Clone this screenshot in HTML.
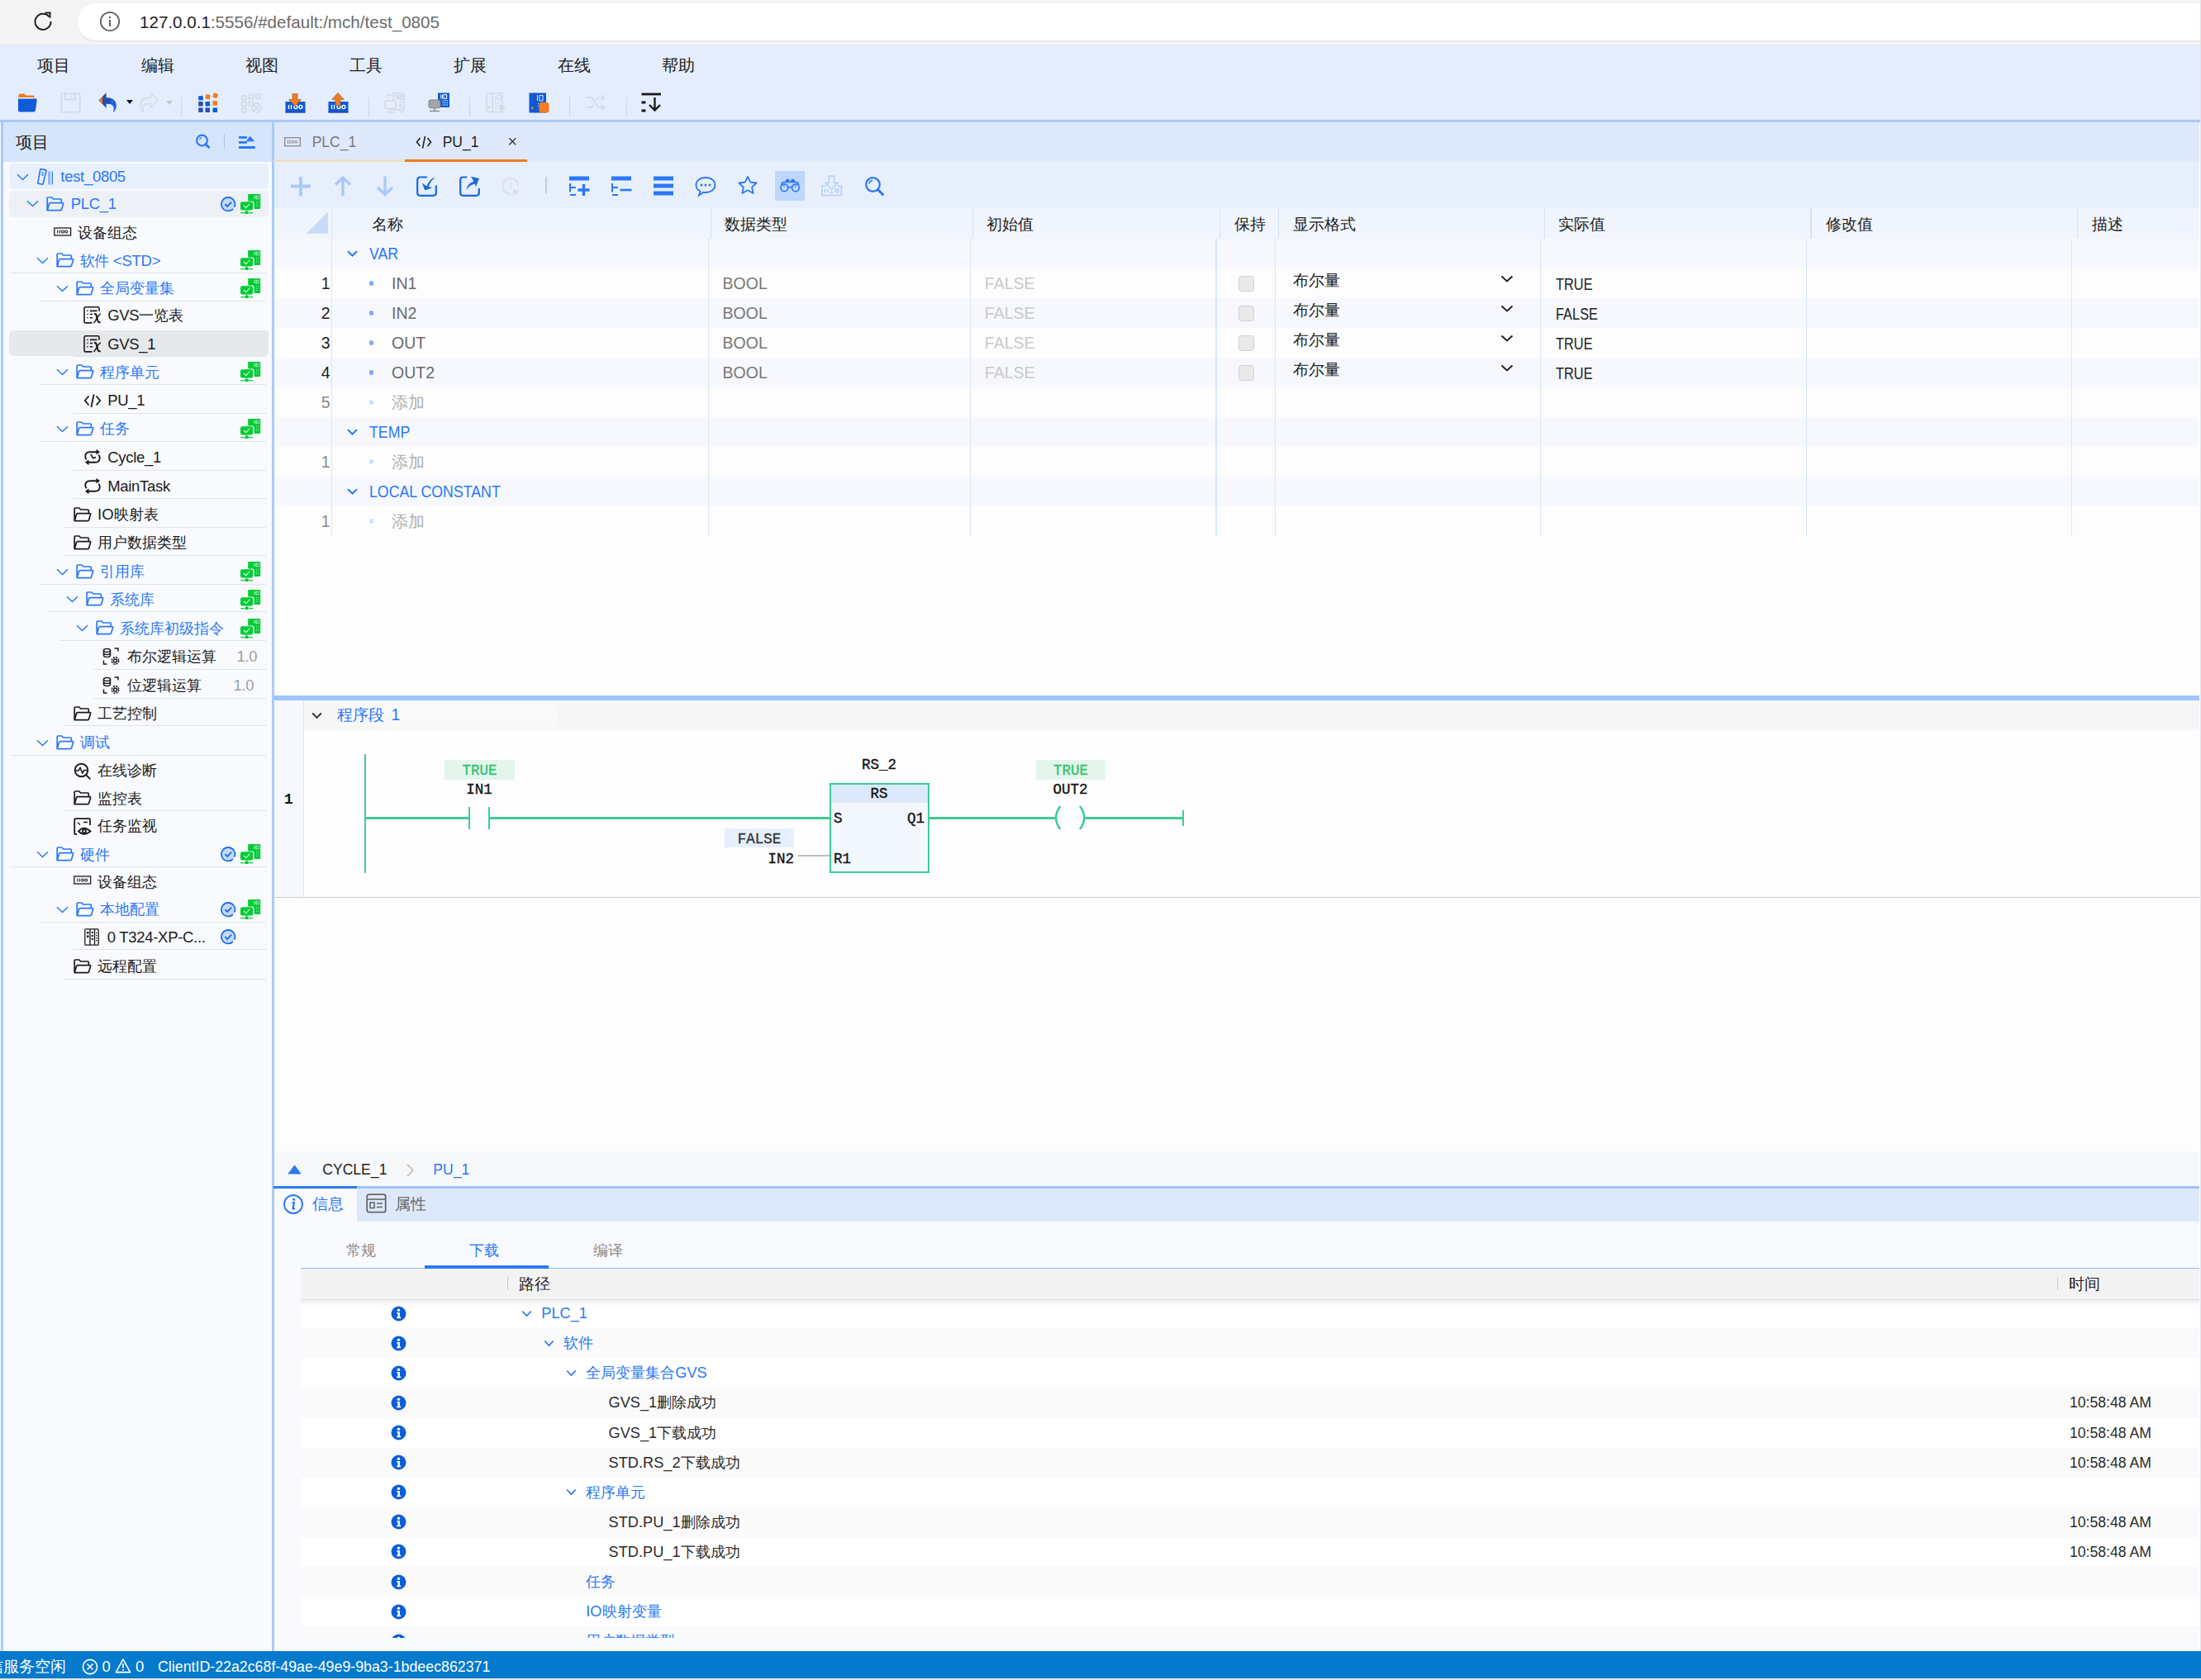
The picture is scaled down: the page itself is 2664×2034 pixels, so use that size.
<!DOCTYPE html><html><head><meta charset="utf-8"><style>
html,body{margin:0;padding:0;width:2664px;height:2034px;overflow:hidden;background:#fff;}
body{position:relative;font-family:"Liberation Sans",sans-serif;}
body>div{position:absolute;box-sizing:border-box;}
.t{white-space:nowrap;}
</style></head><body>
<div style="left:0px;top:0px;width:2664px;height:55px;background:#f4f4f4;"></div>
<div style="left:0px;top:54px;width:2664px;height:1.2px;background:#e4e4e4;"></div>
<div style="left:94px;top:4px;width:2600px;height:45px;background:#ffffff;border-radius:22.5px;box-shadow:0 2px 1px #e9e9e9;"></div>
<svg style="position:absolute;left:38px;top:12px;" width="28" height="28" viewBox="0 0 28 28"><path d="M21.5 8.5 A9.5 9.5 0 1 0 23.5 14" fill="none" stroke="#1f1f1f" stroke-width="2"/><path d="M16.5 3.5 L22.5 3.5 L22.5 9.5" fill="none" stroke="#1f1f1f" stroke-width="2"/></svg>
<svg style="position:absolute;left:120px;top:13px;" width="26" height="26" viewBox="0 0 26 26"><circle cx="13" cy="13" r="11.2" fill="none" stroke="#5f6368" stroke-width="1.8"/><rect x="12" y="11" width="2" height="8" fill="#5f6368"/><rect x="12" y="7" width="2" height="2.2" fill="#5f6368"/></svg>
<div class="t" style="left:169px;top:12.00px;line-height:30px;font-size:20.6px;color:#222;font-family:'Liberation Sans', sans-serif;"><span style="color:#1f1f1f">127.0.0.1</span><span style="color:#6b6b6b">:5556/#default:/mch/test_0805</span></div>
<div style="left:0px;top:55.2px;width:2664px;height:89.8px;background:#e3edfd;"></div>
<div class="t" style="left:44.5px;top:64.00px;line-height:30px;font-size:19.5px;color:#222;font-family:'Liberation Sans', sans-serif;">项目</div>
<div class="t" style="left:170.5px;top:64.00px;line-height:30px;font-size:19.5px;color:#222;font-family:'Liberation Sans', sans-serif;">编辑</div>
<div class="t" style="left:296.5px;top:64.00px;line-height:30px;font-size:19.5px;color:#222;font-family:'Liberation Sans', sans-serif;">视图</div>
<div class="t" style="left:422.5px;top:64.00px;line-height:30px;font-size:19.5px;color:#222;font-family:'Liberation Sans', sans-serif;">工具</div>
<div class="t" style="left:548.5px;top:64.00px;line-height:30px;font-size:19.5px;color:#222;font-family:'Liberation Sans', sans-serif;">扩展</div>
<div class="t" style="left:674.5px;top:64.00px;line-height:30px;font-size:19.5px;color:#222;font-family:'Liberation Sans', sans-serif;">在线</div>
<div class="t" style="left:800.5px;top:64.00px;line-height:30px;font-size:19.5px;color:#222;font-family:'Liberation Sans', sans-serif;">帮助</div>
<div style="left:0px;top:145px;width:2664px;height:3px;background:#a9c9f9;"></div>
<svg style="position:absolute;left:21px;top:112px;" width="25" height="25" viewBox="0 0 25 25"><path d="M1.5 3 Q1.5 1.5 3 1.5 H8.5 L10.5 3.5 H19 Q20.5 3.5 20.5 5 V8 H1.5 Z" fill="#f47b20"/><rect x="2" y="6" width="17.5" height="4" fill="#fff"/><path d="M1 8.5 Q1 7.5 2.2 7.5 H22.5 Q24 7.5 23.7 9 L22 21.5 Q21.7 23.5 19.7 23.5 H3 Q1 23.5 1 21.5 Z" fill="#0f5bd8"/></svg>
<svg style="position:absolute;left:73px;top:112px;" width="25" height="25" viewBox="0 0 25 25"><rect x="1.2" y="1.2" width="22.6" height="22.6" rx="2.5" fill="none" stroke="#d3d9e2" stroke-width="1.6"/><path d="M6 1.5 V8.5 H18 V1.5" fill="none" stroke="#d3d9e2" stroke-width="1.6"/><path d="M12.5 3.5 V6" stroke="#d3d9e2" stroke-width="1.3"/></svg>
<svg style="position:absolute;left:119px;top:111.5px;" width="24" height="26" viewBox="0 0 24 26"><path d="M9.5 6.5 H12.5 Q21.5 7 21.9 16 Q22 20.5 17.8 24.5 Q19.5 19.5 18 16.5 Q16 13.5 9.5 13.5 Z" fill="#1d66de"/><path d="M9 6.5 H14.5 V13.5 H9 Z" fill="#2a4fa8"/><path d="M0.5 9.5 L9.6 0.3 V18.7 Z" fill="#2a4fa8"/><path d="M0.5 9.5 L5 5 V14 Z" fill="#f47b20"/></svg>
<svg style="position:absolute;left:153px;top:121px;" width="8" height="6" viewBox="0 0 8 6"><path d="M0 0 H8 L4 5 Z" fill="#1a1a1a"/></svg>
<svg style="position:absolute;left:168px;top:111.5px;" width="24" height="26" viewBox="0 0 24 26"><path d="M14.5 6.5 H11.5 Q2.5 7 2.1 16 Q2 20.5 6.2 24.5 Q4.5 19.5 6 16.5 Q8 13.5 14.5 13.5 V18.7 L23.5 9.5 L14.5 0.3 Z" fill="none" stroke="#d3d9e2" stroke-width="1.3" stroke-linejoin="round"/></svg>
<svg style="position:absolute;left:201px;top:122px;" width="8" height="6" viewBox="0 0 8 6"><path d="M0 0 H8 L4 5 Z" fill="#c4c4c4"/></svg>
<div style="left:219px;top:118px;width:1.3px;height:24px;background:#cfd6df;"></div>
<svg style="position:absolute;left:240px;top:112px;" width="25" height="25" viewBox="0 0 25 25"><g fill="#0f5bd8"><rect x="0.2" y="4" width="5.5" height="5.5" transform="rotate(-8 3 6.7)"/><rect x="0.2" y="11" width="5.5" height="5.5" fill="#2a4fa8"/><rect x="0.2" y="18.5" width="5.5" height="5.5" fill="#2a4fa8"/><rect x="8.5" y="11" width="5.5" height="5.5" transform="rotate(-10 11.2 13.7)"/><rect x="8.5" y="18.5" width="5.5" height="5.5" fill="#2a4fa8"/><rect x="17.5" y="18.5" width="5.5" height="5.5"/></g><g fill="#f47b20"><rect x="8.8" y="2.5" width="5.5" height="5.5" transform="rotate(10 11.5 5.2)"/><rect x="18" y="1" width="5.5" height="5.5" transform="rotate(20 20.7 3.7)"/><rect x="17.5" y="10.2" width="5.5" height="5.5"/></g></svg>
<svg style="position:absolute;left:292px;top:112px;" width="25" height="25" viewBox="0 0 25 25"><g fill="none" stroke="#d3d9e2" stroke-width="1.5"><rect x="1" y="4" width="5" height="5"/><rect x="9.5" y="2.5" width="5" height="5"/><rect x="18" y="2" width="5" height="5"/><rect x="1" y="11.5" width="5" height="5"/><rect x="9.5" y="11" width="5" height="5"/><rect x="1" y="19" width="5" height="5"/><circle cx="18.5" cy="18.5" r="5.5"/><path d="M15.5 15.5 L21.5 21.5 M21.5 15.5 L15.5 21.5"/></g></svg>
<svg style="position:absolute;left:345px;top:112px;" width="25" height="25" viewBox="0 0 25 25"><rect x="0.5" y="11" width="24" height="13.5" fill="#0f5bd8"/><rect x="0.5" y="22.5" width="24" height="2" fill="#2a4fa8"/><g fill="none" stroke="#fff" stroke-width="1.3"><path d="M4.5 15 V20 M7.5 15 V20"/><circle cx="13" cy="17.5" r="2"/><circle cx="19" cy="17.5" r="2"/></g><path d="M9 1.5 H15 V8.5 H19.5 L12 16.5 L4.5 8.5 H9 Z" fill="#f47b20" stroke="#8a5a30" stroke-width="0.6"/></svg>
<svg style="position:absolute;left:397px;top:112px;" width="25" height="25" viewBox="0 0 25 25"><rect x="0.5" y="11" width="24" height="13.5" fill="#0f5bd8"/><rect x="0.5" y="22.5" width="24" height="2" fill="#2a4fa8"/><g fill="none" stroke="#fff" stroke-width="1.3"><path d="M4.5 15 V20 M7.5 15 V20"/><circle cx="13" cy="17.5" r="2"/><circle cx="19" cy="17.5" r="2"/></g><path d="M12 0.5 L19.5 8.5 H15 V16 H9 V8.5 H4.5 Z" fill="#f47b20" stroke="#8a5a30" stroke-width="0.6"/></svg>
<div style="left:446px;top:118px;width:1.3px;height:24px;background:#cfd6df;"></div>
<svg style="position:absolute;left:465px;top:111.5px;" width="26" height="26" viewBox="0 0 26 26"><g fill="none" stroke="#d3d9e2" stroke-width="1.5"><rect x="11" y="1" width="13" height="20" rx="1"/><path d="M15 3 V8 M17 3 V8 M19 3.5 H22 V8 H19 Z M18 12 H22 M18 15 H22 M18 18 H22"/><rect x="1" y="10" width="13" height="9.5" rx="2" fill="#e8eefa"/><path d="M7.5 19.5 V23 M3 24 H12 M3 5 Q3 3 6 3 H9 M22 22 Q22 24 19 24"/></g></svg>
<svg style="position:absolute;left:518px;top:112px;" width="26" height="26" viewBox="0 0 26 26"><rect x="12" y="0.5" width="14" height="17.5" fill="#0f5bd8"/><g fill="none" stroke="#fff" stroke-width="1"><path d="M15.8 2.5 V7.5 M17.4 2.5 V7.5"/><rect x="19" y="2.7" width="3.6" height="4.6"/><path d="M17.5 9.8 H24 M17.5 12.4 H24 M17.5 15 H24" stroke-dasharray="1.1 0.7"/></g><rect x="1" y="9" width="14" height="9.8" rx="2.2" fill="#a6a6a6" stroke="#7a7a7a" stroke-width="0.9"/><path d="M8 18.8 V22 M2 22.6 H14" stroke="#8a8a8a" stroke-width="1.5"/></svg>
<div style="left:567.5px;top:118px;width:1.3px;height:24px;background:#cfd6df;"></div>
<svg style="position:absolute;left:588px;top:112px;" width="25" height="25" viewBox="0 0 25 25"><g fill="none" stroke="#d3d9e2" stroke-width="1.5"><rect x="1" y="1" width="19" height="22.5"/><path d="M8 1 V23.5"/><path d="M12 4 V9 M14.5 3.5 H18 V9 H14.5 Z M11 13 H17 M11 16 H17 M11 19 H17" stroke-width="1.1"/><circle cx="4" cy="18" r="1"/></g><path d="M17 14 L24 18.5 L17 23 Z" fill="#d3d9e2"/></svg>
<svg style="position:absolute;left:640px;top:112px;" width="25" height="25" viewBox="0 0 25 25"><rect x="0.5" y="0.5" width="20.5" height="24" fill="#0f5bd8"/><path d="M7.5 0.5 V24.5" stroke="#2a4fa8" stroke-width="1.2"/><g fill="none" stroke="#cfe0ff" stroke-width="1.1"><path d="M10.5 3 V10 M13 3.5 H17 V10 H13 Z"/><path d="M11 13.5 H12 M11 16.5 H12"/></g><rect x="3" y="17.5" width="2.5" height="2.5" fill="#f47b20"/><rect x="12.5" y="12" width="12" height="12.5" rx="3" fill="#f47b20"/></svg>
<div style="left:689px;top:118px;width:1.3px;height:24px;background:#cfd6df;"></div>
<svg style="position:absolute;left:708px;top:112px;" width="26" height="25" viewBox="0 0 26 25"><g fill="none" stroke="#d3d9e2" stroke-width="1.6"><path d="M1 6 H6 Q9 6 12 12 Q15 18 18 18 H23 M1 18 H6 Q9 18 10.5 15.5 M13.5 8.5 Q15 6 18 6 H23"/><path d="M20 3 L23.5 6 L20 9 M20 15 L23.5 18 L20 21"/></g></svg>
<div style="left:758px;top:118px;width:1.3px;height:24px;background:#cfd6df;"></div>
<svg style="position:absolute;left:776px;top:111.5px;" width="25" height="24" viewBox="0 0 25 24"><g stroke="#1a1a1a" stroke-width="2.8" fill="none"><path d="M0.5 2 H24"/><path d="M0.5 12 H5.5 M0.5 22 H5.5"/><path d="M16.5 6 V21.5 M10 15 L16.5 21.5 L23 15" stroke-width="2.3"/></g></svg>
<div style="left:0px;top:148px;width:332px;height:1851px;background:#f8fafe;"></div>
<div style="left:1px;top:148px;width:3px;height:1851px;background:#a9c9f9;"></div>
<div style="left:329.4px;top:148px;width:3px;height:1851px;background:#abcaf8;"></div>
<div style="left:4px;top:148px;width:325px;height:48px;background:#d5e5fb;"></div>
<div class="t" style="left:19px;top:157.00px;line-height:30px;font-size:19.5px;color:#222;font-family:'Liberation Sans', sans-serif;">项目</div>
<div style="left:10.5px;top:198.2px;width:314px;height:31px;background:#e8f0fd;border-radius:5px;"></div>
<div style="left:10.5px;top:231px;width:314px;height:32px;background:#edf1f6;border-radius:5px;"></div>
<div style="left:10.5px;top:400px;width:314px;height:31px;background:#e6e8eb;border-radius:5px;"></div>
<div style="left:12px;top:330px;width:310px;height:1.3px;background:#e1e3e6;"></div>
<div style="left:47px;top:364px;width:275px;height:1.3px;background:#e1e3e6;"></div>
<div style="left:89px;top:431px;width:233px;height:1.3px;background:#e1e3e6;"></div>
<div style="left:47px;top:465px;width:275px;height:1.3px;background:#e1e3e6;"></div>
<div style="left:89px;top:500px;width:233px;height:1.3px;background:#e1e3e6;"></div>
<div style="left:47px;top:534px;width:275px;height:1.3px;background:#e1e3e6;"></div>
<div style="left:89px;top:569px;width:233px;height:1.3px;background:#e1e3e6;"></div>
<div style="left:89px;top:603px;width:233px;height:1.3px;background:#e1e3e6;"></div>
<div style="left:77px;top:638px;width:245px;height:1.3px;background:#e1e3e6;"></div>
<div style="left:77px;top:672px;width:245px;height:1.3px;background:#e1e3e6;"></div>
<div style="left:47px;top:707px;width:275px;height:1.3px;background:#e1e3e6;"></div>
<div style="left:59px;top:740px;width:263px;height:1.3px;background:#e1e3e6;"></div>
<div style="left:71px;top:775px;width:251px;height:1.3px;background:#e1e3e6;"></div>
<div style="left:113px;top:810px;width:209px;height:1.3px;background:#e1e3e6;"></div>
<div style="left:113px;top:845px;width:209px;height:1.3px;background:#e1e3e6;"></div>
<div style="left:77px;top:878px;width:245px;height:1.3px;background:#e1e3e6;"></div>
<div style="left:12px;top:914px;width:310px;height:1.3px;background:#e1e3e6;"></div>
<div style="left:77px;top:981px;width:245px;height:1.3px;background:#e1e3e6;"></div>
<div style="left:12px;top:1049px;width:310px;height:1.3px;background:#e1e3e6;"></div>
<div style="left:47px;top:1116px;width:275px;height:1.3px;background:#e1e3e6;"></div>
<div style="left:89px;top:1149px;width:233px;height:1.3px;background:#e1e3e6;"></div>
<div style="left:77px;top:1185px;width:245px;height:1.3px;background:#e1e3e6;"></div>
<svg style="position:absolute;left:20px;top:209.55px;" width="15" height="9.5" viewBox="0 0 15 9.5"><path d="M1 1.2 L7.5 7.5 L14 1.2" fill="none" stroke="#2a78f6" stroke-width="1.5"/></svg>
<svg style="position:absolute;left:45px;top:202.8px;" width="20" height="22" viewBox="0 0 20 22"><g fill="none" stroke="#2a78f6" stroke-width="1.7"><path d="M4.6 1.6 L10.4 2.9 Q11.2 3.1 11 3.9 L7.1 19.6 Q6.9 20.4 6.1 20.2 L1.5 19.1 Q0.7 18.9 0.9 18.1 L3.8 2.2 Q4 1.4 4.6 1.6 Z"/><path d="M5.2 6 L8 6.7 M5 8.6 L7.6 9.2" stroke-width="1.4"/><path d="M14.2 4.6 V20.4" stroke-width="1.1"/><path d="M16.4 4.6 V20.4" stroke-width="1.1" stroke="#9cb8f0"/><path d="M18.4 4.6 V20.4" stroke-width="1.1"/></g></svg>
<div class="t" style="left:73.3px;top:199.30px;line-height:30px;font-size:18.5px;color:#2a78f6;font-family:'Liberation Sans', sans-serif;letter-spacing:-0.3px;">test_0805</div>
<svg style="position:absolute;left:32px;top:242.25px;" width="15" height="9.5" viewBox="0 0 15 9.5"><path d="M1 1.2 L7.5 7.5 L14 1.2" fill="none" stroke="#2a78f6" stroke-width="1.5"/></svg>
<svg style="position:absolute;left:55.5px;top:237.6px;" width="22" height="18" viewBox="0 0 22 18"><g fill="none" stroke="#2a78f6" stroke-width="1.7" stroke-linejoin="round"><path d="M1.2 16.6 V2 Q1.2 1 2.2 1 H6.8 L8.6 3 H17.3 Q18.3 3 18.3 4 V7.5"/><path d="M1.3 16.6 L3.6 8.6 Q3.9 7.6 4.9 7.6 H19.6 Q20.9 7.6 20.6 8.8 L18.6 15.6 Q18.3 16.7 17.2 16.7 Z"/></g></svg>
<div class="t" style="left:85.7px;top:232.00px;line-height:30px;font-size:18.5px;color:#2a78f6;font-family:'Liberation Sans', sans-serif;letter-spacing:-0.3px;">PLC_1</div>
<svg style="position:absolute;left:266.8px;top:237.8px;" width="19" height="19" viewBox="0 0 19 19"><circle cx="9.2" cy="9.2" r="8.2" fill="#c4dafb"/><path d="M15.0 15.0 A8.2 8.2 0 1 1 16.63 12.67" fill="none" stroke="#1f6fe6" stroke-width="1.8"/><path d="M5.3 9.3 L8.2 12 L13.2 6.7" fill="none" stroke="#1f6fe6" stroke-width="1.9"/></svg>
<svg style="position:absolute;left:290.7px;top:234.8px;" width="25" height="24" viewBox="0 0 25 24"><rect x="9.2" y="0" width="15" height="18" rx="1" fill="#00cc33"/><path d="M16.8 1.8 V6 M18.3 1.8 V6" stroke="#b8f0c8" stroke-width="0.8"/><rect x="19.3" y="2.2" width="3" height="3.6" fill="none" stroke="#b8f0c8" stroke-width="0.8"/><path d="M19 9.5 H22.5 M19 12 H22.5 M19 14.5 H22.5" stroke="#b8f0c8" stroke-width="0.8" stroke-dasharray="0.9 0.7"/><rect x="-0.6" y="8.6" width="17.2" height="12" fill="#f4f7fb" rx="2.5"/><rect x="0" y="9.2" width="15.2" height="10.2" rx="2.2" fill="#00cc33"/><path d="M4 14 L6.8 16.6 L11.5 11.5" fill="none" stroke="#dfffe6" stroke-width="1.1"/><rect x="6.8" y="19.4" width="1.6" height="2" fill="#00cc33"/><rect x="5.3" y="21" width="4.6" height="2.9" rx="0.6" fill="#00cc33"/><path d="M0.3 22.6 H4.6 M10.6 22.6 H15" stroke="#00cc33" stroke-width="1.2"/></svg>
<svg style="position:absolute;left:65px;top:274.5px;" width="22" height="12" viewBox="0 0 22 12"><rect x="0.8" y="1" width="19.8" height="9" fill="none" stroke="#1b1b1b" stroke-width="1.3"/><g fill="none" stroke="#1b1b1b" stroke-width="1.05"><path d="M4.8 3.6 V7.4 M7.3 3.6 V7.4"/><circle cx="10.8" cy="5.5" r="1.55"/><circle cx="15.2" cy="5.5" r="1.55"/></g></svg>
<div class="t" style="left:94px;top:267.00px;line-height:30px;font-size:18.5px;color:#1b1b1b;font-family:'Liberation Sans', sans-serif;"><span style="font-size:17.8px">设备组态</span></div>
<svg style="position:absolute;left:44px;top:310.75px;" width="15" height="9.5" viewBox="0 0 15 9.5"><path d="M1 1.2 L7.5 7.5 L14 1.2" fill="none" stroke="#2a78f6" stroke-width="1.5"/></svg>
<svg style="position:absolute;left:67.5px;top:306.1px;" width="22" height="18" viewBox="0 0 22 18"><g fill="none" stroke="#2a78f6" stroke-width="1.7" stroke-linejoin="round"><path d="M1.2 16.6 V2 Q1.2 1 2.2 1 H6.8 L8.6 3 H17.3 Q18.3 3 18.3 4 V7.5"/><path d="M1.3 16.6 L3.6 8.6 Q3.9 7.6 4.9 7.6 H19.6 Q20.9 7.6 20.6 8.8 L18.6 15.6 Q18.3 16.7 17.2 16.7 Z"/></g></svg>
<div class="t" style="left:96.8px;top:300.50px;line-height:30px;font-size:18.5px;color:#2a78f6;font-family:'Liberation Sans', sans-serif;letter-spacing:-0.3px;"><span style="font-size:17.8px">软件</span> &lt;STD&gt;</div>
<svg style="position:absolute;left:290.7px;top:303.3px;" width="25" height="24" viewBox="0 0 25 24"><rect x="9.2" y="0" width="15" height="18" rx="1" fill="#00cc33"/><path d="M16.8 1.8 V6 M18.3 1.8 V6" stroke="#b8f0c8" stroke-width="0.8"/><rect x="19.3" y="2.2" width="3" height="3.6" fill="none" stroke="#b8f0c8" stroke-width="0.8"/><path d="M19 9.5 H22.5 M19 12 H22.5 M19 14.5 H22.5" stroke="#b8f0c8" stroke-width="0.8" stroke-dasharray="0.9 0.7"/><rect x="-0.6" y="8.6" width="17.2" height="12" fill="#f4f7fb" rx="2.5"/><rect x="0" y="9.2" width="15.2" height="10.2" rx="2.2" fill="#00cc33"/><path d="M4 14 L6.8 16.6 L11.5 11.5" fill="none" stroke="#dfffe6" stroke-width="1.1"/><rect x="6.8" y="19.4" width="1.6" height="2" fill="#00cc33"/><rect x="5.3" y="21" width="4.6" height="2.9" rx="0.6" fill="#00cc33"/><path d="M0.3 22.6 H4.6 M10.6 22.6 H15" stroke="#00cc33" stroke-width="1.2"/></svg>
<svg style="position:absolute;left:68px;top:344.55px;" width="15" height="9.5" viewBox="0 0 15 9.5"><path d="M1 1.2 L7.5 7.5 L14 1.2" fill="none" stroke="#2a78f6" stroke-width="1.5"/></svg>
<svg style="position:absolute;left:91.8px;top:339.90000000000003px;" width="22" height="18" viewBox="0 0 22 18"><g fill="none" stroke="#2a78f6" stroke-width="1.7" stroke-linejoin="round"><path d="M1.2 16.6 V2 Q1.2 1 2.2 1 H6.8 L8.6 3 H17.3 Q18.3 3 18.3 4 V7.5"/><path d="M1.3 16.6 L3.6 8.6 Q3.9 7.6 4.9 7.6 H19.6 Q20.9 7.6 20.6 8.8 L18.6 15.6 Q18.3 16.7 17.2 16.7 Z"/></g></svg>
<div class="t" style="left:120.9px;top:334.30px;line-height:30px;font-size:18.5px;color:#2a78f6;font-family:'Liberation Sans', sans-serif;"><span style="font-size:17.8px">全局变量集</span></div>
<svg style="position:absolute;left:290.7px;top:337.1px;" width="25" height="24" viewBox="0 0 25 24"><rect x="9.2" y="0" width="15" height="18" rx="1" fill="#00cc33"/><path d="M16.8 1.8 V6 M18.3 1.8 V6" stroke="#b8f0c8" stroke-width="0.8"/><rect x="19.3" y="2.2" width="3" height="3.6" fill="none" stroke="#b8f0c8" stroke-width="0.8"/><path d="M19 9.5 H22.5 M19 12 H22.5 M19 14.5 H22.5" stroke="#b8f0c8" stroke-width="0.8" stroke-dasharray="0.9 0.7"/><rect x="-0.6" y="8.6" width="17.2" height="12" fill="#f4f7fb" rx="2.5"/><rect x="0" y="9.2" width="15.2" height="10.2" rx="2.2" fill="#00cc33"/><path d="M4 14 L6.8 16.6 L11.5 11.5" fill="none" stroke="#dfffe6" stroke-width="1.1"/><rect x="6.8" y="19.4" width="1.6" height="2" fill="#00cc33"/><rect x="5.3" y="21" width="4.6" height="2.9" rx="0.6" fill="#00cc33"/><path d="M0.3 22.6 H4.6 M10.6 22.6 H15" stroke="#00cc33" stroke-width="1.2"/></svg>
<svg style="position:absolute;left:100.5px;top:371px;" width="23" height="22" viewBox="0 0 23 22"><g fill="none" stroke="#1b1b1b" stroke-width="1.6"><path d="M10.5 19.9 H2.5 Q1 19.9 1 18.4 V2.3 Q1 0.8 2.5 0.8 H17.5 Q19 0.8 19 2.3 V5.8"/><path d="M4.3 5.4 H5.6 M7.9 5.4 H16.5 M4.3 9.5 H5.6 M7.9 9.5 H11 M4.3 13.7 H5.6 M7.9 13.7 H11"/></g><path d="M13 9.4 Q14.6 8.2 15.6 10.5 L17.4 17.5 Q18.2 20 20.6 19" fill="none" stroke="#1b1b1b" stroke-width="2.1"/><path d="M21 9.2 Q19 9.2 16.8 13.5 L14 18.2 Q13.3 19.6 12.3 19.4" fill="none" stroke="#1b1b1b" stroke-width="1.5"/></svg>
<div class="t" style="left:130.2px;top:367.00px;line-height:30px;font-size:18.5px;color:#1b1b1b;font-family:'Liberation Sans', sans-serif;letter-spacing:-0.3px;">GVS<span style="font-size:17.8px">一览表</span></div>
<svg style="position:absolute;left:100.5px;top:405.7px;" width="23" height="22" viewBox="0 0 23 22"><g fill="none" stroke="#1b1b1b" stroke-width="1.6"><path d="M10.5 19.9 H2.5 Q1 19.9 1 18.4 V2.3 Q1 0.8 2.5 0.8 H17.5 Q19 0.8 19 2.3 V5.8"/><path d="M4.3 5.4 H5.6 M7.9 5.4 H16.5 M4.3 9.5 H5.6 M7.9 9.5 H11 M4.3 13.7 H5.6 M7.9 13.7 H11"/></g><path d="M13 9.4 Q14.6 8.2 15.6 10.5 L17.4 17.5 Q18.2 20 20.6 19" fill="none" stroke="#1b1b1b" stroke-width="2.1"/><path d="M21 9.2 Q19 9.2 16.8 13.5 L14 18.2 Q13.3 19.6 12.3 19.4" fill="none" stroke="#1b1b1b" stroke-width="1.5"/></svg>
<div class="t" style="left:130.2px;top:401.70px;line-height:30px;font-size:18.5px;color:#1b1b1b;font-family:'Liberation Sans', sans-serif;letter-spacing:-0.3px;">GVS_1</div>
<svg style="position:absolute;left:68px;top:445.75px;" width="15" height="9.5" viewBox="0 0 15 9.5"><path d="M1 1.2 L7.5 7.5 L14 1.2" fill="none" stroke="#2a78f6" stroke-width="1.5"/></svg>
<svg style="position:absolute;left:91.8px;top:441.1px;" width="22" height="18" viewBox="0 0 22 18"><g fill="none" stroke="#2a78f6" stroke-width="1.7" stroke-linejoin="round"><path d="M1.2 16.6 V2 Q1.2 1 2.2 1 H6.8 L8.6 3 H17.3 Q18.3 3 18.3 4 V7.5"/><path d="M1.3 16.6 L3.6 8.6 Q3.9 7.6 4.9 7.6 H19.6 Q20.9 7.6 20.6 8.8 L18.6 15.6 Q18.3 16.7 17.2 16.7 Z"/></g></svg>
<div class="t" style="left:120.9px;top:435.50px;line-height:30px;font-size:18.5px;color:#2a78f6;font-family:'Liberation Sans', sans-serif;"><span style="font-size:17.8px">程序单元</span></div>
<svg style="position:absolute;left:290.7px;top:438.3px;" width="25" height="24" viewBox="0 0 25 24"><rect x="9.2" y="0" width="15" height="18" rx="1" fill="#00cc33"/><path d="M16.8 1.8 V6 M18.3 1.8 V6" stroke="#b8f0c8" stroke-width="0.8"/><rect x="19.3" y="2.2" width="3" height="3.6" fill="none" stroke="#b8f0c8" stroke-width="0.8"/><path d="M19 9.5 H22.5 M19 12 H22.5 M19 14.5 H22.5" stroke="#b8f0c8" stroke-width="0.8" stroke-dasharray="0.9 0.7"/><rect x="-0.6" y="8.6" width="17.2" height="12" fill="#f4f7fb" rx="2.5"/><rect x="0" y="9.2" width="15.2" height="10.2" rx="2.2" fill="#00cc33"/><path d="M4 14 L6.8 16.6 L11.5 11.5" fill="none" stroke="#dfffe6" stroke-width="1.1"/><rect x="6.8" y="19.4" width="1.6" height="2" fill="#00cc33"/><rect x="5.3" y="21" width="4.6" height="2.9" rx="0.6" fill="#00cc33"/><path d="M0.3 22.6 H4.6 M10.6 22.6 H15" stroke="#00cc33" stroke-width="1.2"/></svg>
<svg style="position:absolute;left:100.5px;top:475.1px;" width="22" height="20" viewBox="0 0 22 20"><g fill="none" stroke="#1b1b1b" stroke-width="1.8"><path d="M6.5 4.5 L1.8 10 L6.5 15.5"/><path d="M15.5 4.5 L20.2 10 L15.5 15.5"/><path d="M12.6 2.5 L9.4 18"/></g></svg>
<div class="t" style="left:130.2px;top:470.10px;line-height:30px;font-size:18.5px;color:#1b1b1b;font-family:'Liberation Sans', sans-serif;letter-spacing:-0.3px;">PU_1</div>
<svg style="position:absolute;left:68px;top:514.55px;" width="15" height="9.5" viewBox="0 0 15 9.5"><path d="M1 1.2 L7.5 7.5 L14 1.2" fill="none" stroke="#2a78f6" stroke-width="1.5"/></svg>
<svg style="position:absolute;left:91.8px;top:509.9px;" width="22" height="18" viewBox="0 0 22 18"><g fill="none" stroke="#2a78f6" stroke-width="1.7" stroke-linejoin="round"><path d="M1.2 16.6 V2 Q1.2 1 2.2 1 H6.8 L8.6 3 H17.3 Q18.3 3 18.3 4 V7.5"/><path d="M1.3 16.6 L3.6 8.6 Q3.9 7.6 4.9 7.6 H19.6 Q20.9 7.6 20.6 8.8 L18.6 15.6 Q18.3 16.7 17.2 16.7 Z"/></g></svg>
<div class="t" style="left:120.9px;top:504.30px;line-height:30px;font-size:18.5px;color:#2a78f6;font-family:'Liberation Sans', sans-serif;"><span style="font-size:17.8px">任务</span></div>
<svg style="position:absolute;left:290.7px;top:507.09999999999997px;" width="25" height="24" viewBox="0 0 25 24"><rect x="9.2" y="0" width="15" height="18" rx="1" fill="#00cc33"/><path d="M16.8 1.8 V6 M18.3 1.8 V6" stroke="#b8f0c8" stroke-width="0.8"/><rect x="19.3" y="2.2" width="3" height="3.6" fill="none" stroke="#b8f0c8" stroke-width="0.8"/><path d="M19 9.5 H22.5 M19 12 H22.5 M19 14.5 H22.5" stroke="#b8f0c8" stroke-width="0.8" stroke-dasharray="0.9 0.7"/><rect x="-0.6" y="8.6" width="17.2" height="12" fill="#f4f7fb" rx="2.5"/><rect x="0" y="9.2" width="15.2" height="10.2" rx="2.2" fill="#00cc33"/><path d="M4 14 L6.8 16.6 L11.5 11.5" fill="none" stroke="#dfffe6" stroke-width="1.1"/><rect x="6.8" y="19.4" width="1.6" height="2" fill="#00cc33"/><rect x="5.3" y="21" width="4.6" height="2.9" rx="0.6" fill="#00cc33"/><path d="M0.3 22.6 H4.6 M10.6 22.6 H15" stroke="#00cc33" stroke-width="1.2"/></svg>
<svg style="position:absolute;left:100.5px;top:543.3px;" width="22" height="21" viewBox="0 0 22 21"><g fill="none" stroke="#1b1b1b" stroke-width="1.9"><path d="M18.5 4.2 H8 Q2.5 4.2 2.2 9.5 Q2.2 12 3.8 13.3"/><path d="M3.5 16.8 H14 Q19.5 16.8 19.8 11.5 Q19.8 9 18.2 7.7"/></g><path d="M15.5 0.8 L20 4.2 L15.5 7.6 Z M6.5 13.4 L2 16.8 L6.5 20.2 Z" fill="#1b1b1b"/><path d="M8.8 6.8 L11.6 11.8 L15 10.6" fill="none" stroke="#1b1b1b" stroke-width="1.7"/></svg>
<div class="t" style="left:130.2px;top:539.30px;line-height:30px;font-size:18.5px;color:#1b1b1b;font-family:'Liberation Sans', sans-serif;letter-spacing:-0.3px;">Cycle_1</div>
<svg style="position:absolute;left:100.5px;top:577.6px;" width="22" height="21" viewBox="0 0 22 21"><g fill="none" stroke="#1b1b1b" stroke-width="1.9"><path d="M18.5 4.2 H8 Q2.5 4.2 2.2 9.5 Q2.2 12 3.8 13.3"/><path d="M3.5 16.8 H14 Q19.5 16.8 19.8 11.5 Q19.8 9 18.2 7.7"/></g><path d="M15.5 0.8 L20 4.2 L15.5 7.6 Z M6.5 13.4 L2 16.8 L6.5 20.2 Z" fill="#1b1b1b"/></svg>
<div class="t" style="left:130.2px;top:573.60px;line-height:30px;font-size:18.5px;color:#1b1b1b;font-family:'Liberation Sans', sans-serif;letter-spacing:-0.3px;">MainTask</div>
<svg style="position:absolute;left:88.8px;top:613.8000000000001px;" width="22" height="18" viewBox="0 0 22 18"><g fill="none" stroke="#1b1b1b" stroke-width="1.7" stroke-linejoin="round"><path d="M1.2 16.6 V2 Q1.2 1 2.2 1 H6.8 L8.6 3 H17.3 Q18.3 3 18.3 4 V7.5"/><path d="M1.3 16.6 L3.6 8.6 Q3.9 7.6 4.9 7.6 H19.6 Q20.9 7.6 20.6 8.8 L18.6 15.6 Q18.3 16.7 17.2 16.7 Z"/></g></svg>
<div class="t" style="left:118px;top:608.20px;line-height:30px;font-size:18.5px;color:#1b1b1b;font-family:'Liberation Sans', sans-serif;">IO<span style="font-size:17.8px">映射表</span></div>
<svg style="position:absolute;left:88.8px;top:648.0px;" width="22" height="18" viewBox="0 0 22 18"><g fill="none" stroke="#1b1b1b" stroke-width="1.7" stroke-linejoin="round"><path d="M1.2 16.6 V2 Q1.2 1 2.2 1 H6.8 L8.6 3 H17.3 Q18.3 3 18.3 4 V7.5"/><path d="M1.3 16.6 L3.6 8.6 Q3.9 7.6 4.9 7.6 H19.6 Q20.9 7.6 20.6 8.8 L18.6 15.6 Q18.3 16.7 17.2 16.7 Z"/></g></svg>
<div class="t" style="left:118px;top:642.40px;line-height:30px;font-size:18.5px;color:#1b1b1b;font-family:'Liberation Sans', sans-serif;"><span style="font-size:17.8px">用户数据类型</span></div>
<svg style="position:absolute;left:68px;top:687.55px;" width="15" height="9.5" viewBox="0 0 15 9.5"><path d="M1 1.2 L7.5 7.5 L14 1.2" fill="none" stroke="#2a78f6" stroke-width="1.5"/></svg>
<svg style="position:absolute;left:91.8px;top:682.9px;" width="22" height="18" viewBox="0 0 22 18"><g fill="none" stroke="#2a78f6" stroke-width="1.7" stroke-linejoin="round"><path d="M1.2 16.6 V2 Q1.2 1 2.2 1 H6.8 L8.6 3 H17.3 Q18.3 3 18.3 4 V7.5"/><path d="M1.3 16.6 L3.6 8.6 Q3.9 7.6 4.9 7.6 H19.6 Q20.9 7.6 20.6 8.8 L18.6 15.6 Q18.3 16.7 17.2 16.7 Z"/></g></svg>
<div class="t" style="left:120.9px;top:677.30px;line-height:30px;font-size:18.5px;color:#2a78f6;font-family:'Liberation Sans', sans-serif;"><span style="font-size:17.8px">引用库</span></div>
<svg style="position:absolute;left:290.7px;top:680.0999999999999px;" width="25" height="24" viewBox="0 0 25 24"><rect x="9.2" y="0" width="15" height="18" rx="1" fill="#00cc33"/><path d="M16.8 1.8 V6 M18.3 1.8 V6" stroke="#b8f0c8" stroke-width="0.8"/><rect x="19.3" y="2.2" width="3" height="3.6" fill="none" stroke="#b8f0c8" stroke-width="0.8"/><path d="M19 9.5 H22.5 M19 12 H22.5 M19 14.5 H22.5" stroke="#b8f0c8" stroke-width="0.8" stroke-dasharray="0.9 0.7"/><rect x="-0.6" y="8.6" width="17.2" height="12" fill="#f4f7fb" rx="2.5"/><rect x="0" y="9.2" width="15.2" height="10.2" rx="2.2" fill="#00cc33"/><path d="M4 14 L6.8 16.6 L11.5 11.5" fill="none" stroke="#dfffe6" stroke-width="1.1"/><rect x="6.8" y="19.4" width="1.6" height="2" fill="#00cc33"/><rect x="5.3" y="21" width="4.6" height="2.9" rx="0.6" fill="#00cc33"/><path d="M0.3 22.6 H4.6 M10.6 22.6 H15" stroke="#00cc33" stroke-width="1.2"/></svg>
<svg style="position:absolute;left:80px;top:721.05px;" width="15" height="9.5" viewBox="0 0 15 9.5"><path d="M1 1.2 L7.5 7.5 L14 1.2" fill="none" stroke="#2a78f6" stroke-width="1.5"/></svg>
<svg style="position:absolute;left:103.6px;top:716.4px;" width="22" height="18" viewBox="0 0 22 18"><g fill="none" stroke="#2a78f6" stroke-width="1.7" stroke-linejoin="round"><path d="M1.2 16.6 V2 Q1.2 1 2.2 1 H6.8 L8.6 3 H17.3 Q18.3 3 18.3 4 V7.5"/><path d="M1.3 16.6 L3.6 8.6 Q3.9 7.6 4.9 7.6 H19.6 Q20.9 7.6 20.6 8.8 L18.6 15.6 Q18.3 16.7 17.2 16.7 Z"/></g></svg>
<div class="t" style="left:133px;top:710.80px;line-height:30px;font-size:18.5px;color:#2a78f6;font-family:'Liberation Sans', sans-serif;"><span style="font-size:17.8px">系统库</span></div>
<svg style="position:absolute;left:290.7px;top:713.5999999999999px;" width="25" height="24" viewBox="0 0 25 24"><rect x="9.2" y="0" width="15" height="18" rx="1" fill="#00cc33"/><path d="M16.8 1.8 V6 M18.3 1.8 V6" stroke="#b8f0c8" stroke-width="0.8"/><rect x="19.3" y="2.2" width="3" height="3.6" fill="none" stroke="#b8f0c8" stroke-width="0.8"/><path d="M19 9.5 H22.5 M19 12 H22.5 M19 14.5 H22.5" stroke="#b8f0c8" stroke-width="0.8" stroke-dasharray="0.9 0.7"/><rect x="-0.6" y="8.6" width="17.2" height="12" fill="#f4f7fb" rx="2.5"/><rect x="0" y="9.2" width="15.2" height="10.2" rx="2.2" fill="#00cc33"/><path d="M4 14 L6.8 16.6 L11.5 11.5" fill="none" stroke="#dfffe6" stroke-width="1.1"/><rect x="6.8" y="19.4" width="1.6" height="2" fill="#00cc33"/><rect x="5.3" y="21" width="4.6" height="2.9" rx="0.6" fill="#00cc33"/><path d="M0.3 22.6 H4.6 M10.6 22.6 H15" stroke="#00cc33" stroke-width="1.2"/></svg>
<svg style="position:absolute;left:92px;top:756.05px;" width="15" height="9.5" viewBox="0 0 15 9.5"><path d="M1 1.2 L7.5 7.5 L14 1.2" fill="none" stroke="#2a78f6" stroke-width="1.5"/></svg>
<svg style="position:absolute;left:115.8px;top:751.4px;" width="22" height="18" viewBox="0 0 22 18"><g fill="none" stroke="#2a78f6" stroke-width="1.7" stroke-linejoin="round"><path d="M1.2 16.6 V2 Q1.2 1 2.2 1 H6.8 L8.6 3 H17.3 Q18.3 3 18.3 4 V7.5"/><path d="M1.3 16.6 L3.6 8.6 Q3.9 7.6 4.9 7.6 H19.6 Q20.9 7.6 20.6 8.8 L18.6 15.6 Q18.3 16.7 17.2 16.7 Z"/></g></svg>
<div class="t" style="left:145.3px;top:745.80px;line-height:30px;font-size:18.5px;color:#2a78f6;font-family:'Liberation Sans', sans-serif;"><span style="font-size:17.8px">系统库初级指令</span></div>
<svg style="position:absolute;left:290.7px;top:748.5999999999999px;" width="25" height="24" viewBox="0 0 25 24"><rect x="9.2" y="0" width="15" height="18" rx="1" fill="#00cc33"/><path d="M16.8 1.8 V6 M18.3 1.8 V6" stroke="#b8f0c8" stroke-width="0.8"/><rect x="19.3" y="2.2" width="3" height="3.6" fill="none" stroke="#b8f0c8" stroke-width="0.8"/><path d="M19 9.5 H22.5 M19 12 H22.5 M19 14.5 H22.5" stroke="#b8f0c8" stroke-width="0.8" stroke-dasharray="0.9 0.7"/><rect x="-0.6" y="8.6" width="17.2" height="12" fill="#f4f7fb" rx="2.5"/><rect x="0" y="9.2" width="15.2" height="10.2" rx="2.2" fill="#00cc33"/><path d="M4 14 L6.8 16.6 L11.5 11.5" fill="none" stroke="#dfffe6" stroke-width="1.1"/><rect x="6.8" y="19.4" width="1.6" height="2" fill="#00cc33"/><rect x="5.3" y="21" width="4.6" height="2.9" rx="0.6" fill="#00cc33"/><path d="M0.3 22.6 H4.6 M10.6 22.6 H15" stroke="#00cc33" stroke-width="1.2"/></svg>
<svg style="position:absolute;left:124.3px;top:784px;" width="22" height="22" viewBox="0 0 22 22"><g fill="none" stroke="#1b1b1b" stroke-width="1.5"><ellipse cx="5.5" cy="3.4" rx="4" ry="2"/><path d="M1.5 3.4 V9.4 Q1.5 11.4 5.5 11.4 Q9.5 11.4 9.5 9.4 V3.4 M1.5 6.4 Q1.5 8.4 5.5 8.4 Q9.5 8.4 9.5 6.4"/><path d="M14.5 1 H19 V4.5 M1.5 15.5 V20 H5.5"/><circle cx="15.5" cy="16" r="2"/><circle cx="15.5" cy="16" r="4.2" stroke-dasharray="2.2 1.1"/></g></svg>
<div class="t" style="left:153.8px;top:780.00px;line-height:30px;font-size:18.5px;color:#1b1b1b;font-family:'Liberation Sans', sans-serif;"><span style="font-size:17.8px">布尔逻辑运算</span></div>
<div class="t" style="left:286.5px;top:780.00px;line-height:30px;font-size:18.5px;color:#a0a0a0;font-family:'Liberation Sans', sans-serif;letter-spacing:-0.3px;">1.0</div>
<svg style="position:absolute;left:124.3px;top:819px;" width="22" height="22" viewBox="0 0 22 22"><g fill="none" stroke="#1b1b1b" stroke-width="1.5"><ellipse cx="5.5" cy="3.4" rx="4" ry="2"/><path d="M1.5 3.4 V9.4 Q1.5 11.4 5.5 11.4 Q9.5 11.4 9.5 9.4 V3.4 M1.5 6.4 Q1.5 8.4 5.5 8.4 Q9.5 8.4 9.5 6.4"/><path d="M14.5 1 H19 V4.5 M1.5 15.5 V20 H5.5"/><circle cx="15.5" cy="16" r="2"/><circle cx="15.5" cy="16" r="4.2" stroke-dasharray="2.2 1.1"/></g></svg>
<div class="t" style="left:153.8px;top:815.00px;line-height:30px;font-size:18.5px;color:#1b1b1b;font-family:'Liberation Sans', sans-serif;"><span style="font-size:17.8px">位逻辑运算</span></div>
<div class="t" style="left:282.5px;top:815.00px;line-height:30px;font-size:18.5px;color:#a0a0a0;font-family:'Liberation Sans', sans-serif;letter-spacing:-0.3px;">1.0</div>
<svg style="position:absolute;left:88.8px;top:854.5px;" width="22" height="18" viewBox="0 0 22 18"><g fill="none" stroke="#1b1b1b" stroke-width="1.7" stroke-linejoin="round"><path d="M1.2 16.6 V2 Q1.2 1 2.2 1 H6.8 L8.6 3 H17.3 Q18.3 3 18.3 4 V7.5"/><path d="M1.3 16.6 L3.6 8.6 Q3.9 7.6 4.9 7.6 H19.6 Q20.9 7.6 20.6 8.8 L18.6 15.6 Q18.3 16.7 17.2 16.7 Z"/></g></svg>
<div class="t" style="left:117.9px;top:848.90px;line-height:30px;font-size:18.5px;color:#1b1b1b;font-family:'Liberation Sans', sans-serif;"><span style="font-size:17.8px">工艺控制</span></div>
<svg style="position:absolute;left:44px;top:894.55px;" width="15" height="9.5" viewBox="0 0 15 9.5"><path d="M1 1.2 L7.5 7.5 L14 1.2" fill="none" stroke="#2a78f6" stroke-width="1.5"/></svg>
<svg style="position:absolute;left:67.5px;top:889.9px;" width="22" height="18" viewBox="0 0 22 18"><g fill="none" stroke="#2a78f6" stroke-width="1.7" stroke-linejoin="round"><path d="M1.2 16.6 V2 Q1.2 1 2.2 1 H6.8 L8.6 3 H17.3 Q18.3 3 18.3 4 V7.5"/><path d="M1.3 16.6 L3.6 8.6 Q3.9 7.6 4.9 7.6 H19.6 Q20.9 7.6 20.6 8.8 L18.6 15.6 Q18.3 16.7 17.2 16.7 Z"/></g></svg>
<div class="t" style="left:97px;top:884.30px;line-height:30px;font-size:18.5px;color:#2a78f6;font-family:'Liberation Sans', sans-serif;"><span style="font-size:17.8px">调试</span></div>
<svg style="position:absolute;left:88.8px;top:922.5px;" width="22" height="22" viewBox="0 0 22 22"><g fill="none" stroke="#1b1b1b" stroke-width="1.9"><circle cx="9.5" cy="9.5" r="7.8"/><path d="M15.2 15.2 L20.3 20.3"/><path d="M2 10 H6 L8 6.5 L10.8 13 L12.8 9.5 H16.5" stroke-width="1.6"/></g></svg>
<div class="t" style="left:118px;top:917.50px;line-height:30px;font-size:18.5px;color:#1b1b1b;font-family:'Liberation Sans', sans-serif;"><span style="font-size:17.8px">在线诊断</span></div>
<svg style="position:absolute;left:88.8px;top:957.3000000000001px;" width="22" height="18" viewBox="0 0 22 18"><g fill="none" stroke="#1b1b1b" stroke-width="1.7" stroke-linejoin="round"><path d="M1.2 16.6 V2 Q1.2 1 2.2 1 H6.8 L8.6 3 H17.3 Q18.3 3 18.3 4 V7.5"/><path d="M1.3 16.6 L3.6 8.6 Q3.9 7.6 4.9 7.6 H19.6 Q20.9 7.6 20.6 8.8 L18.6 15.6 Q18.3 16.7 17.2 16.7 Z"/></g></svg>
<div class="t" style="left:118px;top:951.70px;line-height:30px;font-size:18.5px;color:#1b1b1b;font-family:'Liberation Sans', sans-serif;"><span style="font-size:17.8px">监控表</span></div>
<svg style="position:absolute;left:88.8px;top:989.9px;" width="22" height="22" viewBox="0 0 22 22"><g fill="none" stroke="#1b1b1b" stroke-width="1.8"><path d="M4 20 H2.2 Q1.2 20 1.2 19 V2.2 Q1.2 1.2 2.2 1.2 H19 Q20 1.2 20 2.2 V9"/><path d="M5 6 L8 8.5 M12 5.5 H17" stroke-width="1.5"/><path d="M6 16.5 Q12.5 9 20.5 16.5 Q12.5 23 6 16.5 Z"/><circle cx="13" cy="16.4" r="2" /></g></svg>
<div class="t" style="left:118px;top:985.40px;line-height:30px;font-size:18.5px;color:#1b1b1b;font-family:'Liberation Sans', sans-serif;"><span style="font-size:17.8px">任务监视</span></div>
<svg style="position:absolute;left:44px;top:1029.85px;" width="15" height="9.5" viewBox="0 0 15 9.5"><path d="M1 1.2 L7.5 7.5 L14 1.2" fill="none" stroke="#2a78f6" stroke-width="1.5"/></svg>
<svg style="position:absolute;left:67.5px;top:1025.1999999999998px;" width="22" height="18" viewBox="0 0 22 18"><g fill="none" stroke="#2a78f6" stroke-width="1.7" stroke-linejoin="round"><path d="M1.2 16.6 V2 Q1.2 1 2.2 1 H6.8 L8.6 3 H17.3 Q18.3 3 18.3 4 V7.5"/><path d="M1.3 16.6 L3.6 8.6 Q3.9 7.6 4.9 7.6 H19.6 Q20.9 7.6 20.6 8.8 L18.6 15.6 Q18.3 16.7 17.2 16.7 Z"/></g></svg>
<div class="t" style="left:97px;top:1019.60px;line-height:30px;font-size:18.5px;color:#2a78f6;font-family:'Liberation Sans', sans-serif;"><span style="font-size:17.8px">硬件</span></div>
<svg style="position:absolute;left:266.8px;top:1025.3999999999999px;" width="19" height="19" viewBox="0 0 19 19"><circle cx="9.2" cy="9.2" r="8.2" fill="#c4dafb"/><path d="M15.0 15.0 A8.2 8.2 0 1 1 16.63 12.67" fill="none" stroke="#1f6fe6" stroke-width="1.8"/><path d="M5.3 9.3 L8.2 12 L13.2 6.7" fill="none" stroke="#1f6fe6" stroke-width="1.9"/></svg>
<svg style="position:absolute;left:290.7px;top:1022.3999999999999px;" width="25" height="24" viewBox="0 0 25 24"><rect x="9.2" y="0" width="15" height="18" rx="1" fill="#00cc33"/><path d="M16.8 1.8 V6 M18.3 1.8 V6" stroke="#b8f0c8" stroke-width="0.8"/><rect x="19.3" y="2.2" width="3" height="3.6" fill="none" stroke="#b8f0c8" stroke-width="0.8"/><path d="M19 9.5 H22.5 M19 12 H22.5 M19 14.5 H22.5" stroke="#b8f0c8" stroke-width="0.8" stroke-dasharray="0.9 0.7"/><rect x="-0.6" y="8.6" width="17.2" height="12" fill="#f4f7fb" rx="2.5"/><rect x="0" y="9.2" width="15.2" height="10.2" rx="2.2" fill="#00cc33"/><path d="M4 14 L6.8 16.6 L11.5 11.5" fill="none" stroke="#dfffe6" stroke-width="1.1"/><rect x="6.8" y="19.4" width="1.6" height="2" fill="#00cc33"/><rect x="5.3" y="21" width="4.6" height="2.9" rx="0.6" fill="#00cc33"/><path d="M0.3 22.6 H4.6 M10.6 22.6 H15" stroke="#00cc33" stroke-width="1.2"/></svg>
<svg style="position:absolute;left:88.8px;top:1060.4px;" width="22" height="12" viewBox="0 0 22 12"><rect x="0.8" y="1" width="19.8" height="9" fill="none" stroke="#1b1b1b" stroke-width="1.3"/><g fill="none" stroke="#1b1b1b" stroke-width="1.05"><path d="M4.8 3.6 V7.4 M7.3 3.6 V7.4"/><circle cx="10.8" cy="5.5" r="1.55"/><circle cx="15.2" cy="5.5" r="1.55"/></g></svg>
<div class="t" style="left:118px;top:1052.90px;line-height:30px;font-size:18.5px;color:#1b1b1b;font-family:'Liberation Sans', sans-serif;"><span style="font-size:17.8px">设备组态</span></div>
<svg style="position:absolute;left:68px;top:1096.55px;" width="15" height="9.5" viewBox="0 0 15 9.5"><path d="M1 1.2 L7.5 7.5 L14 1.2" fill="none" stroke="#2a78f6" stroke-width="1.5"/></svg>
<svg style="position:absolute;left:91.5px;top:1091.8999999999999px;" width="22" height="18" viewBox="0 0 22 18"><g fill="none" stroke="#2a78f6" stroke-width="1.7" stroke-linejoin="round"><path d="M1.2 16.6 V2 Q1.2 1 2.2 1 H6.8 L8.6 3 H17.3 Q18.3 3 18.3 4 V7.5"/><path d="M1.3 16.6 L3.6 8.6 Q3.9 7.6 4.9 7.6 H19.6 Q20.9 7.6 20.6 8.8 L18.6 15.6 Q18.3 16.7 17.2 16.7 Z"/></g></svg>
<div class="t" style="left:121px;top:1086.30px;line-height:30px;font-size:18.5px;color:#2a78f6;font-family:'Liberation Sans', sans-serif;"><span style="font-size:17.8px">本地配置</span></div>
<svg style="position:absolute;left:266.8px;top:1092.1px;" width="19" height="19" viewBox="0 0 19 19"><circle cx="9.2" cy="9.2" r="8.2" fill="#c4dafb"/><path d="M15.0 15.0 A8.2 8.2 0 1 1 16.63 12.67" fill="none" stroke="#1f6fe6" stroke-width="1.8"/><path d="M5.3 9.3 L8.2 12 L13.2 6.7" fill="none" stroke="#1f6fe6" stroke-width="1.9"/></svg>
<svg style="position:absolute;left:290.7px;top:1089.1px;" width="25" height="24" viewBox="0 0 25 24"><rect x="9.2" y="0" width="15" height="18" rx="1" fill="#00cc33"/><path d="M16.8 1.8 V6 M18.3 1.8 V6" stroke="#b8f0c8" stroke-width="0.8"/><rect x="19.3" y="2.2" width="3" height="3.6" fill="none" stroke="#b8f0c8" stroke-width="0.8"/><path d="M19 9.5 H22.5 M19 12 H22.5 M19 14.5 H22.5" stroke="#b8f0c8" stroke-width="0.8" stroke-dasharray="0.9 0.7"/><rect x="-0.6" y="8.6" width="17.2" height="12" fill="#f4f7fb" rx="2.5"/><rect x="0" y="9.2" width="15.2" height="10.2" rx="2.2" fill="#00cc33"/><path d="M4 14 L6.8 16.6 L11.5 11.5" fill="none" stroke="#dfffe6" stroke-width="1.1"/><rect x="6.8" y="19.4" width="1.6" height="2" fill="#00cc33"/><rect x="5.3" y="21" width="4.6" height="2.9" rx="0.6" fill="#00cc33"/><path d="M0.3 22.6 H4.6 M10.6 22.6 H15" stroke="#00cc33" stroke-width="1.2"/></svg>
<svg style="position:absolute;left:102.4px;top:1124.1px;" width="18" height="21" viewBox="0 0 18 21"><g fill="none" stroke="#1b1b1b" stroke-width="1.3"><rect x="0.8" y="0.8" width="16.4" height="19.4" rx="1"/><path d="M7 1 V20 M12.5 1 V20"/></g><g fill="#1b1b1b"><rect x="3" y="4" width="2.5" height="2.5"/><rect x="3" y="8.5" width="2.5" height="2.5"/><rect x="8.8" y="4" width="2" height="2"/><rect x="8.8" y="8" width="2" height="2"/><rect x="8.8" y="12" width="2" height="2"/><rect x="14" y="5" width="1.6" height="1.2"/><rect x="14" y="8" width="1.6" height="1.2"/><rect x="14" y="11" width="1.6" height="1.2"/><rect x="14" y="14" width="1.6" height="1.2"/></g></svg>
<div class="t" style="left:129.8px;top:1119.60px;line-height:30px;font-size:18.5px;color:#1b1b1b;font-family:'Liberation Sans', sans-serif;letter-spacing:-0.3px;">0 T324-XP-C...</div>
<svg style="position:absolute;left:266.8px;top:1125.3999999999999px;" width="19" height="19" viewBox="0 0 19 19"><circle cx="9.2" cy="9.2" r="8.2" fill="#c4dafb"/><path d="M15.0 15.0 A8.2 8.2 0 1 1 16.63 12.67" fill="none" stroke="#1f6fe6" stroke-width="1.8"/><path d="M5.3 9.3 L8.2 12 L13.2 6.7" fill="none" stroke="#1f6fe6" stroke-width="1.9"/></svg>
<svg style="position:absolute;left:88.8px;top:1160.6px;" width="22" height="18" viewBox="0 0 22 18"><g fill="none" stroke="#1b1b1b" stroke-width="1.7" stroke-linejoin="round"><path d="M1.2 16.6 V2 Q1.2 1 2.2 1 H6.8 L8.6 3 H17.3 Q18.3 3 18.3 4 V7.5"/><path d="M1.3 16.6 L3.6 8.6 Q3.9 7.6 4.9 7.6 H19.6 Q20.9 7.6 20.6 8.8 L18.6 15.6 Q18.3 16.7 17.2 16.7 Z"/></g></svg>
<div class="t" style="left:118px;top:1155.00px;line-height:30px;font-size:18.5px;color:#1b1b1b;font-family:'Liberation Sans', sans-serif;"><span style="font-size:17.8px">远程配置</span></div>
<svg style="position:absolute;left:234px;top:160px;" width="24" height="24" viewBox="0 0 24 24"><circle cx="10.5" cy="10" r="6.4" fill="none" stroke="#2a78f6" stroke-width="2.1"/><path d="M15 14.8 L18.6 18.3" stroke="#2a78f6" stroke-width="2.9" stroke-linecap="round"/><path d="M7.6 9.2 Q8 7.2 10 6.6" fill="none" stroke="#2a78f6" stroke-width="1.2"/></svg>
<div style="left:270.5px;top:162px;width:1.5px;height:18px;background:#b6c8e0;"></div>
<svg style="position:absolute;left:288.8px;top:163px;" width="20" height="18" viewBox="0 0 20 18"><path d="M0 3.4 H8.3 M0 9.4 H8.3 M0 15.5 H18.7" stroke="#2a78f6" stroke-width="2.8" stroke-linecap="round" transform="translate(0.8 0) scale(0.96 1)"/><path d="M9.4 7.8 L13.7 2.2 L18.4 7.8 Z" fill="#2a78f6" stroke="#2a78f6" stroke-width="0.9" stroke-linejoin="round"/></svg>
<div style="left:332px;top:148px;width:2330px;height:48px;background:#dee9fc;"></div>
<div style="left:332px;top:196px;width:2330px;height:56px;background:#e7effd;"></div>
<div style="left:332px;top:252px;width:2330px;height:37px;background:#f0f5fe;"></div>
<div style="left:332px;top:289px;width:2330px;height:553px;background:#fdfdfe;"></div>
<div style="left:332px;top:842px;width:2330px;height:6px;background:#9ec4fa;"></div>
<div style="left:332px;top:848px;width:2330px;height:238px;background:#fdfdfe;"></div>
<div style="left:332px;top:1086px;width:2330px;height:308px;background:#fdfdfd;"></div>
<div style="left:332px;top:1394px;width:2330px;height:42px;background:#f7f8fa;"></div>
<div style="left:332px;top:1436px;width:2330px;height:3px;background:#9ec4fa;"></div>
<div style="left:332px;top:1439px;width:2330px;height:40px;background:#dde9fb;"></div>
<div style="left:332px;top:1479px;width:2330px;height:520px;background:#f8fafe;"></div>
<div style="left:2662.6px;top:0px;width:1.4px;height:2034px;background:#e2e4e8;"></div>
<svg style="position:absolute;left:344px;top:166px;" width="20" height="12" viewBox="0 0 20 12"><rect x="0.7" y="0.7" width="18.6" height="10" fill="none" stroke="#8a8a8a" stroke-width="1.3"/><g fill="none" stroke="#8a8a8a" stroke-width="1"><path d="M4.5 3.5 V8 M6.8 3.5 V8"/><circle cx="10.3" cy="5.8" r="1.5"/><circle cx="14.3" cy="5.8" r="1.5"/></g></svg>
<div class="t" style="left:377.7px;top:157.00px;line-height:30px;font-size:17.5px;color:#7a7a7a;font-family:'Liberation Sans', sans-serif;">PLC_1</div>
<div style="left:331px;top:192.8px;width:159px;height:3.2px;background:#eedfc2;"></div>
<svg style="position:absolute;left:503px;top:162px;" width="20" height="20" viewBox="0 0 20 20"><g fill="none" stroke="#222" stroke-width="1.6"><path d="M5.5 5 L1.5 10 L5.5 15"/><path d="M14.5 5 L18.5 10 L14.5 15"/><path d="M11.5 3 L8.5 17.5"/></g></svg>
<div class="t" style="left:535.7px;top:157.00px;line-height:30px;font-size:17.5px;color:#1e1e1e;font-family:'Liberation Sans', sans-serif;">PU_1</div>
<svg style="position:absolute;left:615px;top:165.5px;" width="11" height="11" viewBox="0 0 11 11"><path d="M1.3 1.3 L9.3 9.3 M9.3 1.3 L1.3 9.3" stroke="#333" stroke-width="1.3"/></svg>
<div style="left:490px;top:192.8px;width:148px;height:3.2px;background:#f07a1a;"></div>
<svg style="position:absolute;left:352px;top:213.5px;" width="24" height="24" viewBox="0 0 24 24"><path d="M12 0 V23.5 M0 11.5 H24" stroke="#a9c9f9" stroke-width="3.8"/></svg>
<svg style="position:absolute;left:404px;top:212.5px;" width="22" height="25" viewBox="0 0 22 25"><path d="M11 3 V24 M2 10.5 L11 2 L20 10.5" fill="none" stroke="#a9c9f9" stroke-width="3.4"/></svg>
<svg style="position:absolute;left:455px;top:212.5px;" width="22" height="25" viewBox="0 0 22 25"><path d="M11 0.5 V22 M2 14 L11 22.5 L20 14" fill="none" stroke="#a9c9f9" stroke-width="3.4"/></svg>
<svg style="position:absolute;left:504px;top:212.5px;" width="26" height="26" viewBox="0 0 26 26"><path d="M12.8 1.5 H4.5 Q1.2 1.5 1.2 4.8 V20.5 Q1.2 23.8 4.5 23.8 H20.5 Q23.8 23.8 23.8 20.5 V11.5" fill="none" stroke="#1769e0" stroke-width="2.2"/><path d="M22.7 1.7 Q15.5 3.5 12.5 12.5 L6.7 8.5 L10.4 17.4 L19.6 14 L14.8 13.3 Q16.5 6.5 22.7 1.7 Z" fill="#1769e0"/></svg>
<svg style="position:absolute;left:555.5px;top:212.5px;" width="26" height="26" viewBox="0 0 26 26"><path d="M9.3 1.5 H4.5 Q1.2 1.5 1.2 4.8 V20.5 Q1.2 23.8 4.5 23.8 H20.5 Q23.8 23.8 23.8 20.5 V15" fill="none" stroke="#1769e0" stroke-width="2.2"/><path d="M8.2 17 Q9.5 9 17.5 6.8 L14 0.7 L23.9 3.1 L20.1 12.9 L18.6 9.6 Q12.5 11 8.2 17 Z" fill="#1769e0"/></svg>
<svg style="position:absolute;left:606px;top:212.5px;" width="26" height="26" viewBox="0 0 26 26"><path d="M21.5 12.5 A9.5 9.5 0 1 0 12 22" fill="none" stroke="#d8e0ea" stroke-width="2"/><path d="M12 8 V15" stroke="#d8e0ea" stroke-width="1.6"/><path d="M15 15 L23 19.5 L15 24 Z" fill="#d8e0ea"/></svg>
<div style="left:660px;top:214px;width:1.5px;height:20px;background:#c4cfdc;"></div>
<svg style="position:absolute;left:689px;top:212.5px;" width="25" height="25" viewBox="0 0 25 25"><rect x="0" y="0.5" width="24" height="5" fill="#2a78f6"/><path d="M1 9 V19.5 M1 14 H8 M1 23 H8" stroke="#2a78f6" stroke-width="2"/><path d="M17.5 10 V24 M10.5 17 H24.5" stroke="#2a78f6" stroke-width="3.4"/></svg>
<svg style="position:absolute;left:740px;top:212.5px;" width="25" height="25" viewBox="0 0 25 25"><rect x="0" y="0.5" width="24" height="5" fill="#2a78f6"/><path d="M1 9 V19.5 M1 14 H8 M1 23 H8" stroke="#2a78f6" stroke-width="2"/><path d="M10.5 17 H24.5" stroke="#2a78f6" stroke-width="2.6"/></svg>
<svg style="position:absolute;left:791px;top:212.5px;" width="25" height="25" viewBox="0 0 25 25"><rect x="0" y="0.5" width="24" height="5" fill="#2a78f6"/><rect x="0" y="9.5" width="24" height="5" fill="#2a78f6"/><rect x="0" y="18.5" width="24" height="5" fill="#2a78f6"/></svg>
<svg style="position:absolute;left:841px;top:212.5px;" width="26" height="26" viewBox="0 0 26 26"><path d="M13 2 C6 2 1.5 6 1.5 11 C1.5 14.5 3.5 17 6.5 18.5 L5 23.5 L10.5 19.8 C11.3 19.9 12.1 20 13 20 C20 20 24.5 16 24.5 11 C24.5 6 20 2 13 2 Z" fill="none" stroke="#2a78f6" stroke-width="1.8"/><circle cx="8" cy="11" r="1.5" fill="#2a78f6"/><circle cx="13" cy="11" r="1.5" fill="#2a78f6"/><circle cx="18" cy="11" r="1.5" fill="#2a78f6"/></svg>
<svg style="position:absolute;left:892px;top:212.0px;" width="26" height="26" viewBox="0 0 26 26"><path d="M13 1.8 L16.2 8.6 L23.6 9.5 L18.1 14.6 L19.6 22 L13 18.3 L6.4 22 L7.9 14.6 L2.4 9.5 L9.8 8.6 Z" fill="none" stroke="#2a78f6" stroke-width="1.8" stroke-linejoin="round"/></svg>
<div style="left:937.8px;top:207px;width:36px;height:35.7px;background:#bfd7fb;"></div>
<svg style="position:absolute;left:940px;top:212px;" width="32" height="24" viewBox="0 0 32 24"><g fill="none" stroke="#2a78f6" stroke-width="1.6"><circle cx="9.3" cy="15.3" r="4.4"/><circle cx="23" cy="15.3" r="4.4"/><path d="M13.7 14.6 H18.6"/><path d="M6 12 Q6 8.5 9 8.5 H23.5 Q26.5 8.5 26.5 12"/><path d="M7.6 13.2 Q9 12.6 10.2 13.8 M21.3 13.2 Q22.7 12.6 23.9 13.8" stroke-width="1"/></g><path d="M10.5 8.8 Q10.5 4.8 13.3 4.8 Q16 4.8 16 8.8 Z M16.8 8.8 Q16.8 4.8 19.6 4.8 Q22.4 4.8 22.4 8.8 Z" fill="#2a78f6"/></svg>
<svg style="position:absolute;left:994px;top:212px;" width="26" height="26" viewBox="0 0 26 26"><g fill="none" stroke="#b8d2f8" stroke-width="1.7"><path d="M9.5 1.2 H15.5 V9.3 H19.8 L12.5 17.3 L5.2 9.3 H9.5 Z"/><path d="M5.8 13 H1 V24.3 H24.3 V13 H19.5"/><path d="M4.3 17 V21 M7.6 17 V21"/><circle cx="19" cy="18.8" r="1.9"/><path d="M11 20.5 Q12.5 21.5 14 20.5"/></g></svg>
<svg style="position:absolute;left:1046px;top:212.5px;" width="26" height="26" viewBox="0 0 26 26"><circle cx="10.5" cy="10.5" r="8.3" fill="none" stroke="#2a78f6" stroke-width="2.2"/><path d="M16.5 16.5 L22.5 22.5" stroke="#2a78f6" stroke-width="3" stroke-linecap="round"/><path d="M6 9.5 Q6.5 6 10 5.5" fill="none" stroke="#2a78f6" stroke-width="1.6"/></svg>
<div style="left:370.5px;top:256.3px;width:26.5px;height:26.4px;background:#c7dbf8;clip-path:polygon(100% 0,100% 100%,0 100%);"></div>
<div style="left:401.0px;top:252px;width:1.2px;height:37px;background:#d3e3f9;"></div>
<div style="left:860.0px;top:252px;width:1.2px;height:37px;background:#d3e3f9;"></div>
<div style="left:1176.7px;top:252px;width:1.2px;height:37px;background:#d3e3f9;"></div>
<div style="left:1475.8000000000002px;top:252px;width:1.2px;height:37px;background:#d3e3f9;"></div>
<div style="left:1546.7px;top:252px;width:1.2px;height:37px;background:#d3e3f9;"></div>
<div style="left:1868.6000000000001px;top:252px;width:1.2px;height:37px;background:#d3e3f9;"></div>
<div style="left:2191.4px;top:252px;width:1.2px;height:37px;background:#d3e3f9;"></div>
<div style="left:2514.0px;top:252px;width:1.2px;height:37px;background:#d3e3f9;"></div>
<div class="t" style="left:450px;top:256.50px;line-height:30px;font-size:19px;color:#222;font-family:'Liberation Sans', sans-serif;">名称</div>
<div class="t" style="left:877.2px;top:256.50px;line-height:30px;font-size:19px;color:#222;font-family:'Liberation Sans', sans-serif;">数据类型</div>
<div class="t" style="left:1194.4px;top:256.50px;line-height:30px;font-size:19px;color:#222;font-family:'Liberation Sans', sans-serif;">初始值</div>
<div class="t" style="left:1493.6px;top:256.50px;line-height:30px;font-size:19px;color:#222;font-family:'Liberation Sans', sans-serif;">保持</div>
<div class="t" style="left:1564.5px;top:256.50px;line-height:30px;font-size:19px;color:#222;font-family:'Liberation Sans', sans-serif;">显示格式</div>
<div class="t" style="left:1886px;top:256.50px;line-height:30px;font-size:19px;color:#222;font-family:'Liberation Sans', sans-serif;">实际值</div>
<div class="t" style="left:2209.5px;top:256.50px;line-height:30px;font-size:19px;color:#222;font-family:'Liberation Sans', sans-serif;">修改值</div>
<div class="t" style="left:2531.6px;top:256.50px;line-height:30px;font-size:19px;color:#222;font-family:'Liberation Sans', sans-serif;">描述</div>
<div style="left:332px;top:289px;width:2330px;height:36px;background:#f6f8fe;"></div>
<div style="left:332px;top:361px;width:2330px;height:36px;background:#f6f8fe;"></div>
<div style="left:332px;top:433px;width:2330px;height:36px;background:#f6f8fe;"></div>
<div style="left:332px;top:505px;width:2330px;height:36px;background:#f6f8fe;"></div>
<div style="left:332px;top:577px;width:2330px;height:36px;background:#f6f8fe;"></div>
<div style="left:400.9px;top:289px;width:1.2px;height:360px;background:#d8e6f9;"></div>
<div style="left:856.6px;top:289px;width:1.2px;height:360px;background:#d8e6f9;"></div>
<div style="left:1173.8000000000002px;top:289px;width:1.2px;height:360px;background:#d8e6f9;"></div>
<div style="left:1471.4px;top:289px;width:1.2px;height:360px;background:#d8e6f9;"></div>
<div style="left:1542.8000000000002px;top:289px;width:1.2px;height:360px;background:#d8e6f9;"></div>
<div style="left:1863.7px;top:289px;width:1.2px;height:360px;background:#d8e6f9;"></div>
<div style="left:2185.9px;top:289px;width:1.2px;height:360px;background:#d8e6f9;"></div>
<div style="left:2506.9px;top:289px;width:1.2px;height:360px;background:#d8e6f9;"></div>
<svg style="position:absolute;left:420px;top:302.5px;" width="13" height="8" viewBox="0 0 13 8"><path d="M1 1.3 L6.5 6.5 L12 1.3" fill="none" stroke="#2a78f6" stroke-width="2"/></svg>
<div class="t" style="left:447px;top:292.00px;line-height:30px;font-size:19.5px;color:#2a78f6;font-family:'Liberation Sans', sans-serif;transform:scaleX(0.91);transform-origin:0 50%;">VAR</div>
<svg style="position:absolute;left:420px;top:518.5px;" width="13" height="8" viewBox="0 0 13 8"><path d="M1 1.3 L6.5 6.5 L12 1.3" fill="none" stroke="#2a78f6" stroke-width="2"/></svg>
<div class="t" style="left:447px;top:508.00px;line-height:30px;font-size:19.5px;color:#2a78f6;font-family:'Liberation Sans', sans-serif;transform:scaleX(0.91);transform-origin:0 50%;">TEMP</div>
<svg style="position:absolute;left:420px;top:590.5px;" width="13" height="8" viewBox="0 0 13 8"><path d="M1 1.3 L6.5 6.5 L12 1.3" fill="none" stroke="#2a78f6" stroke-width="2"/></svg>
<div class="t" style="left:447px;top:580.00px;line-height:30px;font-size:19.5px;color:#2a78f6;font-family:'Liberation Sans', sans-serif;transform:scaleX(0.91);transform-origin:0 50%;">LOCAL CONSTANT</div>
<div class="t" style="right:2264.5px;top:328.00px;line-height:30px;font-size:19.5px;color:#222;font-family:'Liberation Sans', sans-serif;text-align:right;">1</div>
<div style="left:447.3px;top:340.4px;width:5.2px;height:5.2px;border-radius:50%;background:#7eabf5"></div>
<div class="t" style="left:474px;top:328.00px;line-height:30px;font-size:19.5px;color:#6a6a6a;font-family:'Liberation Sans', sans-serif;">IN1</div>
<div class="t" style="left:874.6px;top:328.00px;line-height:30px;font-size:19.5px;color:#777;font-family:'Liberation Sans', sans-serif;">BOOL</div>
<div class="t" style="left:1191.8px;top:328.00px;line-height:30px;font-size:19.5px;color:#c9c9c9;font-family:'Liberation Sans', sans-serif;">FALSE</div>
<div style="left:1499px;top:334px;width:18.5px;height:18.5px;border-radius:3.5px;background:#e9e9e9;border:1.2px solid #d2d2d2"></div>
<div class="t" style="left:1564.5px;top:325.00px;line-height:30px;font-size:18.8px;color:#222;font-family:'Liberation Sans', sans-serif;">布尔量</div>
<svg style="position:absolute;left:1816px;top:333px;" width="16" height="9" viewBox="0 0 16 9"><path d="M1.5 1.5 L8 7.5 L14.5 1.5" fill="none" stroke="#222" stroke-width="2"/></svg>
<div class="t" style="left:1882.5px;top:329.00px;line-height:30px;font-size:19.5px;color:#222;font-family:'Liberation Sans', sans-serif;transform:scaleX(0.84);transform-origin:0 50%;">TRUE</div>
<div class="t" style="right:2264.5px;top:364.00px;line-height:30px;font-size:19.5px;color:#222;font-family:'Liberation Sans', sans-serif;text-align:right;">2</div>
<div style="left:447.3px;top:376.4px;width:5.2px;height:5.2px;border-radius:50%;background:#7eabf5"></div>
<div class="t" style="left:474px;top:364.00px;line-height:30px;font-size:19.5px;color:#6a6a6a;font-family:'Liberation Sans', sans-serif;">IN2</div>
<div class="t" style="left:874.6px;top:364.00px;line-height:30px;font-size:19.5px;color:#777;font-family:'Liberation Sans', sans-serif;">BOOL</div>
<div class="t" style="left:1191.8px;top:364.00px;line-height:30px;font-size:19.5px;color:#c9c9c9;font-family:'Liberation Sans', sans-serif;">FALSE</div>
<div style="left:1499px;top:370px;width:18.5px;height:18.5px;border-radius:3.5px;background:#e9e9e9;border:1.2px solid #d2d2d2"></div>
<div class="t" style="left:1564.5px;top:361.00px;line-height:30px;font-size:18.8px;color:#222;font-family:'Liberation Sans', sans-serif;">布尔量</div>
<svg style="position:absolute;left:1816px;top:369px;" width="16" height="9" viewBox="0 0 16 9"><path d="M1.5 1.5 L8 7.5 L14.5 1.5" fill="none" stroke="#222" stroke-width="2"/></svg>
<div class="t" style="left:1882.5px;top:365.00px;line-height:30px;font-size:19.5px;color:#222;font-family:'Liberation Sans', sans-serif;transform:scaleX(0.84);transform-origin:0 50%;">FALSE</div>
<div class="t" style="right:2264.5px;top:400.00px;line-height:30px;font-size:19.5px;color:#222;font-family:'Liberation Sans', sans-serif;text-align:right;">3</div>
<div style="left:447.3px;top:412.4px;width:5.2px;height:5.2px;border-radius:50%;background:#7eabf5"></div>
<div class="t" style="left:474px;top:400.00px;line-height:30px;font-size:19.5px;color:#6a6a6a;font-family:'Liberation Sans', sans-serif;">OUT</div>
<div class="t" style="left:874.6px;top:400.00px;line-height:30px;font-size:19.5px;color:#777;font-family:'Liberation Sans', sans-serif;">BOOL</div>
<div class="t" style="left:1191.8px;top:400.00px;line-height:30px;font-size:19.5px;color:#c9c9c9;font-family:'Liberation Sans', sans-serif;">FALSE</div>
<div style="left:1499px;top:406px;width:18.5px;height:18.5px;border-radius:3.5px;background:#e9e9e9;border:1.2px solid #d2d2d2"></div>
<div class="t" style="left:1564.5px;top:397.00px;line-height:30px;font-size:18.8px;color:#222;font-family:'Liberation Sans', sans-serif;">布尔量</div>
<svg style="position:absolute;left:1816px;top:405px;" width="16" height="9" viewBox="0 0 16 9"><path d="M1.5 1.5 L8 7.5 L14.5 1.5" fill="none" stroke="#222" stroke-width="2"/></svg>
<div class="t" style="left:1882.5px;top:401.00px;line-height:30px;font-size:19.5px;color:#222;font-family:'Liberation Sans', sans-serif;transform:scaleX(0.84);transform-origin:0 50%;">TRUE</div>
<div class="t" style="right:2264.5px;top:436.00px;line-height:30px;font-size:19.5px;color:#222;font-family:'Liberation Sans', sans-serif;text-align:right;">4</div>
<div style="left:447.3px;top:448.4px;width:5.2px;height:5.2px;border-radius:50%;background:#7eabf5"></div>
<div class="t" style="left:474px;top:436.00px;line-height:30px;font-size:19.5px;color:#6a6a6a;font-family:'Liberation Sans', sans-serif;">OUT2</div>
<div class="t" style="left:874.6px;top:436.00px;line-height:30px;font-size:19.5px;color:#777;font-family:'Liberation Sans', sans-serif;">BOOL</div>
<div class="t" style="left:1191.8px;top:436.00px;line-height:30px;font-size:19.5px;color:#c9c9c9;font-family:'Liberation Sans', sans-serif;">FALSE</div>
<div style="left:1499px;top:442px;width:18.5px;height:18.5px;border-radius:3.5px;background:#e9e9e9;border:1.2px solid #d2d2d2"></div>
<div class="t" style="left:1564.5px;top:433.00px;line-height:30px;font-size:18.8px;color:#222;font-family:'Liberation Sans', sans-serif;">布尔量</div>
<svg style="position:absolute;left:1816px;top:441px;" width="16" height="9" viewBox="0 0 16 9"><path d="M1.5 1.5 L8 7.5 L14.5 1.5" fill="none" stroke="#222" stroke-width="2"/></svg>
<div class="t" style="left:1882.5px;top:437.00px;line-height:30px;font-size:19.5px;color:#222;font-family:'Liberation Sans', sans-serif;transform:scaleX(0.84);transform-origin:0 50%;">TRUE</div>
<div class="t" style="right:2264.5px;top:472.00px;line-height:30px;font-size:19.5px;color:#8a8a8a;font-family:'Liberation Sans', sans-serif;text-align:right;">5</div>
<div style="left:447.3px;top:484.4px;width:5.2px;height:5.2px;border-radius:50%;background:#cfe0fb"></div>
<div class="t" style="left:474px;top:472.00px;line-height:30px;font-size:19.5px;color:#b0b0b0;font-family:'Liberation Sans', sans-serif;">添加</div>
<div class="t" style="right:2264.5px;top:544.00px;line-height:30px;font-size:19.5px;color:#8a8a8a;font-family:'Liberation Sans', sans-serif;text-align:right;">1</div>
<div style="left:447.3px;top:556.4px;width:5.2px;height:5.2px;border-radius:50%;background:#cfe0fb"></div>
<div class="t" style="left:474px;top:544.00px;line-height:30px;font-size:19.5px;color:#b0b0b0;font-family:'Liberation Sans', sans-serif;">添加</div>
<div class="t" style="right:2264.5px;top:616.00px;line-height:30px;font-size:19.5px;color:#8a8a8a;font-family:'Liberation Sans', sans-serif;text-align:right;">1</div>
<div style="left:447.3px;top:628.4px;width:5.2px;height:5.2px;border-radius:50%;background:#cfe0fb"></div>
<div class="t" style="left:474px;top:616.00px;line-height:30px;font-size:19.5px;color:#b0b0b0;font-family:'Liberation Sans', sans-serif;">添加</div>
<div style="left:0px;top:1999px;width:2664px;height:33px;background:#047acc;"></div>
<div style="left:0px;top:2032px;width:2664px;height:2px;background:#e6e6e6;"></div>
<div style="left:332px;top:848px;width:2330px;height:36px;background:#f6f6f7;"></div>
<div style="left:332px;top:848px;width:35.5px;height:238px;background:#f5f8fe;"></div>
<div style="left:367px;top:848px;width:1.3px;height:238px;background:#d6e4f8;"></div>
<div style="left:406px;top:851.5px;width:269px;height:28.5px;background:#f9f9f9;border-radius:5px;"></div>
<svg style="position:absolute;left:377px;top:861.5px;" width="13" height="9" viewBox="0 0 13 9"><path d="M1.2 1.5 L6.5 7 L11.8 1.5" fill="none" stroke="#333" stroke-width="1.9"/></svg>
<div class="t" style="left:408.4px;top:850.50px;line-height:30px;font-size:19.3px;color:#2a78f6;font-family:'Liberation Sans', sans-serif;">程序段<span style="margin-left:8px">1</span></div>
<div style="left:332px;top:1085.5px;width:2330px;height:1.4px;background:#cdcdcd;"></div>
<div class="t" style="left:344px;top:953.00px;line-height:30px;font-size:17.5px;color:#111;font-family:'Liberation Mono', monospace;font-weight:bold;">1</div>
<div style="left:441px;top:912.8px;width:2.2px;height:144.7px;background:#3fcb96;"></div>
<div style="left:443px;top:989.4px;width:125px;height:2.2px;background:#3fcb96;"></div>
<div style="left:567px;top:977px;width:2.2px;height:27px;background:#3fcb96;"></div>
<div style="left:591px;top:977px;width:2.2px;height:27px;background:#3fcb96;"></div>
<div style="left:593px;top:989.4px;width:411px;height:2.2px;background:#3fcb96;"></div>
<div style="left:538.3px;top:920px;width:84.3px;height:23.6px;background:#e4f5ec;"></div>
<div class="t" style="left:530.5px;width:100px;text-align:center;top:917.00px;line-height:30px;font-size:17.5px;color:#2cc46c;font-family:'Liberation Mono', monospace;transform:translateY(1px);-webkit-text-stroke:0.35px currentColor;">TRUE</div>
<div class="t" style="left:530.0px;width:100px;text-align:center;top:940.00px;line-height:30px;font-size:17.5px;color:#111;font-family:'Liberation Mono', monospace;transform:translateY(1px);-webkit-text-stroke:0.35px currentColor;">IN1</div>
<div style="left:877px;top:1002.5px;width:83.7px;height:23.8px;background:#e6effc;"></div>
<div class="t" style="left:869.0px;width:100px;text-align:center;top:999.50px;line-height:30px;font-size:17.5px;color:#333;font-family:'Liberation Mono', monospace;transform:translateY(1px);-webkit-text-stroke:0.35px currentColor;">FALSE</div>
<div class="t" style="right:1703px;top:1023.50px;line-height:30px;font-size:17.5px;color:#111;font-family:'Liberation Mono', monospace;text-align:right;transform:translateY(1px);-webkit-text-stroke:0.35px currentColor;">IN2</div>
<div style="left:966px;top:1035px;width:38px;height:1.8px;background:#bdbdbd;"></div>
<div style="left:1004px;top:947.5px;width:121px;height:109px;border:2px solid #3fcb96;background:#f3f7fe"></div>
<div style="left:1006px;top:949.5px;width:117px;height:22px;background:#dce8fb;"></div>
<div class="t" style="left:1004.0px;width:120px;text-align:center;top:910.30px;line-height:30px;font-size:17.5px;color:#111;font-family:'Liberation Mono', monospace;transform:translateY(1px);-webkit-text-stroke:0.35px currentColor;">RS_2</div>
<div class="t" style="left:1004.0px;width:120px;text-align:center;top:945.00px;line-height:30px;font-size:17.5px;color:#111;font-family:'Liberation Mono', monospace;transform:translateY(1px);-webkit-text-stroke:0.35px currentColor;">RS</div>
<div class="t" style="left:1009px;top:975.00px;line-height:30px;font-size:17.5px;color:#111;font-family:'Liberation Mono', monospace;transform:translateY(1px);-webkit-text-stroke:0.35px currentColor;">S</div>
<div class="t" style="right:1545px;top:975.00px;line-height:30px;font-size:17.5px;color:#111;font-family:'Liberation Mono', monospace;text-align:right;transform:translateY(1px);-webkit-text-stroke:0.35px currentColor;">Q1</div>
<div class="t" style="left:1009px;top:1024.00px;line-height:30px;font-size:17.5px;color:#111;font-family:'Liberation Mono', monospace;transform:translateY(1px);-webkit-text-stroke:0.35px currentColor;">R1</div>
<div style="left:1125px;top:989.4px;width:153.5px;height:2.2px;background:#3fcb96;"></div>
<svg style="position:absolute;left:1276px;top:974px;" width="40" height="32" viewBox="0 0 40 32"><path d="M7.4 2 Q-3.2 16 7.4 30" fill="none" stroke="#3fcb96" stroke-width="2.5"/><path d="M31 2 Q41.6 16 31 30" fill="none" stroke="#3fcb96" stroke-width="2.5"/></svg>
<div style="left:1313px;top:989.4px;width:119px;height:2.2px;background:#3fcb96;"></div>
<div style="left:1431px;top:981px;width:2.2px;height:18.5px;background:#3fcb96;"></div>
<div style="left:1253.7px;top:920px;width:84.3px;height:23.6px;background:#e4f5ec;"></div>
<div class="t" style="left:1246.0px;width:100px;text-align:center;top:917.00px;line-height:30px;font-size:17.5px;color:#2cc46c;font-family:'Liberation Mono', monospace;transform:translateY(1px);-webkit-text-stroke:0.35px currentColor;">TRUE</div>
<div class="t" style="left:1245.5px;width:100px;text-align:center;top:939.50px;line-height:30px;font-size:17.5px;color:#111;font-family:'Liberation Mono', monospace;transform:translateY(1px);-webkit-text-stroke:0.35px currentColor;">OUT2</div>
<svg style="position:absolute;left:348px;top:1410px;" width="17" height="12" viewBox="0 0 17 12"><path d="M8.5 1 L16 11 H1 Z" fill="#2a78f6" stroke="#2a78f6" stroke-width="1" stroke-linejoin="round"/></svg>
<div class="t" style="left:390.2px;top:1400.50px;line-height:30px;font-size:17.6px;color:#1e1e1e;font-family:'Liberation Sans', sans-serif;">CYCLE_1</div>
<svg style="position:absolute;left:490px;top:1408px;" width="14" height="18" viewBox="0 0 14 18"><path d="M3 2 L10 9 L3 16" fill="none" stroke="#c5c5c5" stroke-width="1.8"/></svg>
<div class="t" style="left:524.2px;top:1400.50px;line-height:30px;font-size:17.6px;color:#2a78f6;font-family:'Liberation Sans', sans-serif;">PU_1</div>
<div style="left:332px;top:1439px;width:100px;height:40px;background:#f8fafe;"></div>
<div style="left:331px;top:1436px;width:101px;height:3.2px;background:#2b7cf2;"></div>
<svg style="position:absolute;left:342px;top:1445px;" width="26" height="26" viewBox="0 0 26 26"><circle cx="13" cy="13" r="11" fill="none" stroke="#2a78f6" stroke-width="1.9"/><path d="M13.6 7.3 h0.1" stroke="#2a78f6" stroke-width="3" stroke-linecap="round"/><path d="M11.5 11 H14 L12.5 18.5 H15" fill="none" stroke="#2a78f6" stroke-width="2.2" stroke-linejoin="round"/></svg>
<div class="t" style="left:377.7px;top:1442.50px;line-height:30px;font-size:18.8px;color:#2a78f6;font-family:'Liberation Sans', sans-serif;">信息</div>
<svg style="position:absolute;left:443px;top:1445px;" width="26" height="25" viewBox="0 0 26 25"><rect x="1.2" y="1.2" width="22.5" height="21.5" rx="2.5" fill="none" stroke="#666" stroke-width="1.8"/><path d="M1.5 7 H23.5" stroke="#666" stroke-width="1.6"/><rect x="5" y="11" width="5" height="6.5" fill="none" stroke="#666" stroke-width="1.6"/><path d="M13 12 H20 M13 16.5 H20" stroke="#666" stroke-width="1.6"/></svg>
<div class="t" style="left:477.7px;top:1442.50px;line-height:30px;font-size:18.8px;color:#666;font-family:'Liberation Sans', sans-serif;">属性</div>
<div class="t" style="left:418.6px;top:1498.60px;line-height:30px;font-size:18.3px;color:#8a8a8a;font-family:'Liberation Sans', sans-serif;">常规</div>
<div class="t" style="left:568px;top:1498.60px;line-height:30px;font-size:18.3px;color:#2a78f6;font-family:'Liberation Sans', sans-serif;">下载</div>
<div class="t" style="left:718px;top:1498.60px;line-height:30px;font-size:18.3px;color:#8a8a8a;font-family:'Liberation Sans', sans-serif;">编译</div>
<div style="left:364px;top:1534.5px;width:2298px;height:1.2px;background:#8fbaf7;"></div>
<div style="left:514px;top:1532.4px;width:150px;height:3.4px;background:#2a78f6;"></div>
<div style="left:364px;top:1535.7px;width:2298px;height:35.8px;background:#f3f3f3;"></div>
<div style="left:614px;top:1546px;width:1.3px;height:16px;background:#c8c8c8;"></div>
<div class="t" style="left:628px;top:1539.50px;line-height:30px;font-size:18.8px;color:#222;font-family:'Liberation Sans', sans-serif;">路径</div>
<div style="left:2490px;top:1546px;width:1.3px;height:16px;background:#c8c8c8;"></div>
<div class="t" style="left:2504.3px;top:1539.50px;line-height:30px;font-size:18.8px;color:#222;font-family:'Liberation Sans', sans-serif;">时间</div>
<div style="left:364px;top:1572.2px;width:2298px;height:410.8px;overflow:hidden">
<div style="position:absolute;left:0;top:0.0px;width:2298px;height:36.2px;background:#ffffff"></div>
<svg style="position:absolute;left:108.7px;top:8.5px" width="19" height="19"><circle cx="9.5" cy="9.5" r="9" fill="#0b5ed7"/><circle cx="9.5" cy="5.2" r="1.7" fill="#fff"/><path d="M7.2 8 H10.9 V13.6 H12.2 V15.2 H7.2 V13.6 H8.5 V9.5 H7.2 Z" fill="#fff"/></svg>
<svg style="position:absolute;left:266.8px;top:13.5px" width="13" height="9"><path d="M1.2 1.5 L6.5 7 L11.8 1.5" fill="none" stroke="#2a78f6" stroke-width="1.8"/></svg>
<div class="t" style="position:absolute;left:291.3px;top:3.0px;line-height:30px;font-size:18.2px;color:#2a78f6">PLC_1</div>
<div style="position:absolute;left:0;top:36.1px;width:2298px;height:36.2px;background:#fafafa"></div>
<svg style="position:absolute;left:108.7px;top:44.6px" width="19" height="19"><circle cx="9.5" cy="9.5" r="9" fill="#0b5ed7"/><circle cx="9.5" cy="5.2" r="1.7" fill="#fff"/><path d="M7.2 8 H10.9 V13.6 H12.2 V15.2 H7.2 V13.6 H8.5 V9.5 H7.2 Z" fill="#fff"/></svg>
<svg style="position:absolute;left:294.0px;top:49.6px" width="13" height="9"><path d="M1.2 1.5 L6.5 7 L11.8 1.5" fill="none" stroke="#2a78f6" stroke-width="1.8"/></svg>
<div class="t" style="position:absolute;left:318.0px;top:39.1px;line-height:30px;font-size:18.2px;color:#2a78f6"><span style="font-size:17.6px">软件</span></div>
<div style="position:absolute;left:0;top:72.2px;width:2298px;height:36.2px;background:#ffffff"></div>
<svg style="position:absolute;left:108.7px;top:80.7px" width="19" height="19"><circle cx="9.5" cy="9.5" r="9" fill="#0b5ed7"/><circle cx="9.5" cy="5.2" r="1.7" fill="#fff"/><path d="M7.2 8 H10.9 V13.6 H12.2 V15.2 H7.2 V13.6 H8.5 V9.5 H7.2 Z" fill="#fff"/></svg>
<svg style="position:absolute;left:321.3px;top:85.7px" width="13" height="9"><path d="M1.2 1.5 L6.5 7 L11.8 1.5" fill="none" stroke="#2a78f6" stroke-width="1.8"/></svg>
<div class="t" style="position:absolute;left:345.3px;top:75.2px;line-height:30px;font-size:18.2px;color:#2a78f6"><span style="font-size:17.6px">全局变量集合</span>GVS</div>
<div style="position:absolute;left:0;top:108.3px;width:2298px;height:36.2px;background:#fafafa"></div>
<svg style="position:absolute;left:108.7px;top:116.8px" width="19" height="19"><circle cx="9.5" cy="9.5" r="9" fill="#0b5ed7"/><circle cx="9.5" cy="5.2" r="1.7" fill="#fff"/><path d="M7.2 8 H10.9 V13.6 H12.2 V15.2 H7.2 V13.6 H8.5 V9.5 H7.2 Z" fill="#fff"/></svg>
<div class="t" style="position:absolute;left:372.6px;top:111.3px;line-height:30px;font-size:18.2px;color:#2b2b2b">GVS_1<span style="font-size:17.6px">删除成功</span></div>
<div class="t" style="position:absolute;left:2141px;top:111.3px;line-height:30px;font-size:17.6px;color:#2b2b2b">10:58:48 AM</div>
<div style="position:absolute;left:0;top:144.4px;width:2298px;height:36.2px;background:#ffffff"></div>
<svg style="position:absolute;left:108.7px;top:152.9px" width="19" height="19"><circle cx="9.5" cy="9.5" r="9" fill="#0b5ed7"/><circle cx="9.5" cy="5.2" r="1.7" fill="#fff"/><path d="M7.2 8 H10.9 V13.6 H12.2 V15.2 H7.2 V13.6 H8.5 V9.5 H7.2 Z" fill="#fff"/></svg>
<div class="t" style="position:absolute;left:372.6px;top:147.4px;line-height:30px;font-size:18.2px;color:#2b2b2b">GVS_1<span style="font-size:17.6px">下载成功</span></div>
<div class="t" style="position:absolute;left:2141px;top:147.4px;line-height:30px;font-size:17.6px;color:#2b2b2b">10:58:48 AM</div>
<div style="position:absolute;left:0;top:180.5px;width:2298px;height:36.2px;background:#fafafa"></div>
<svg style="position:absolute;left:108.7px;top:189.0px" width="19" height="19"><circle cx="9.5" cy="9.5" r="9" fill="#0b5ed7"/><circle cx="9.5" cy="5.2" r="1.7" fill="#fff"/><path d="M7.2 8 H10.9 V13.6 H12.2 V15.2 H7.2 V13.6 H8.5 V9.5 H7.2 Z" fill="#fff"/></svg>
<div class="t" style="position:absolute;left:372.6px;top:183.5px;line-height:30px;font-size:18.2px;color:#2b2b2b">STD.RS_2<span style="font-size:17.6px">下载成功</span></div>
<div class="t" style="position:absolute;left:2141px;top:183.5px;line-height:30px;font-size:17.6px;color:#2b2b2b">10:58:48 AM</div>
<div style="position:absolute;left:0;top:216.6px;width:2298px;height:36.2px;background:#ffffff"></div>
<svg style="position:absolute;left:108.7px;top:225.1px" width="19" height="19"><circle cx="9.5" cy="9.5" r="9" fill="#0b5ed7"/><circle cx="9.5" cy="5.2" r="1.7" fill="#fff"/><path d="M7.2 8 H10.9 V13.6 H12.2 V15.2 H7.2 V13.6 H8.5 V9.5 H7.2 Z" fill="#fff"/></svg>
<svg style="position:absolute;left:321.3px;top:230.1px" width="13" height="9"><path d="M1.2 1.5 L6.5 7 L11.8 1.5" fill="none" stroke="#2a78f6" stroke-width="1.8"/></svg>
<div class="t" style="position:absolute;left:345.3px;top:219.6px;line-height:30px;font-size:18.2px;color:#2a78f6"><span style="font-size:17.6px">程序单元</span></div>
<div style="position:absolute;left:0;top:252.7px;width:2298px;height:36.2px;background:#fafafa"></div>
<svg style="position:absolute;left:108.7px;top:261.2px" width="19" height="19"><circle cx="9.5" cy="9.5" r="9" fill="#0b5ed7"/><circle cx="9.5" cy="5.2" r="1.7" fill="#fff"/><path d="M7.2 8 H10.9 V13.6 H12.2 V15.2 H7.2 V13.6 H8.5 V9.5 H7.2 Z" fill="#fff"/></svg>
<div class="t" style="position:absolute;left:372.6px;top:255.7px;line-height:30px;font-size:18.2px;color:#2b2b2b">STD.PU_1<span style="font-size:17.6px">删除成功</span></div>
<div class="t" style="position:absolute;left:2141px;top:255.7px;line-height:30px;font-size:17.6px;color:#2b2b2b">10:58:48 AM</div>
<div style="position:absolute;left:0;top:288.8px;width:2298px;height:36.2px;background:#ffffff"></div>
<svg style="position:absolute;left:108.7px;top:297.3px" width="19" height="19"><circle cx="9.5" cy="9.5" r="9" fill="#0b5ed7"/><circle cx="9.5" cy="5.2" r="1.7" fill="#fff"/><path d="M7.2 8 H10.9 V13.6 H12.2 V15.2 H7.2 V13.6 H8.5 V9.5 H7.2 Z" fill="#fff"/></svg>
<div class="t" style="position:absolute;left:372.6px;top:291.8px;line-height:30px;font-size:18.2px;color:#2b2b2b">STD.PU_1<span style="font-size:17.6px">下载成功</span></div>
<div class="t" style="position:absolute;left:2141px;top:291.8px;line-height:30px;font-size:17.6px;color:#2b2b2b">10:58:48 AM</div>
<div style="position:absolute;left:0;top:324.9px;width:2298px;height:36.2px;background:#fafafa"></div>
<svg style="position:absolute;left:108.7px;top:333.4px" width="19" height="19"><circle cx="9.5" cy="9.5" r="9" fill="#0b5ed7"/><circle cx="9.5" cy="5.2" r="1.7" fill="#fff"/><path d="M7.2 8 H10.9 V13.6 H12.2 V15.2 H7.2 V13.6 H8.5 V9.5 H7.2 Z" fill="#fff"/></svg>
<div class="t" style="position:absolute;left:345.3px;top:327.9px;line-height:30px;font-size:18.2px;color:#2a78f6"><span style="font-size:17.6px">任务</span></div>
<div style="position:absolute;left:0;top:361.0px;width:2298px;height:36.2px;background:#ffffff"></div>
<svg style="position:absolute;left:108.7px;top:369.5px" width="19" height="19"><circle cx="9.5" cy="9.5" r="9" fill="#0b5ed7"/><circle cx="9.5" cy="5.2" r="1.7" fill="#fff"/><path d="M7.2 8 H10.9 V13.6 H12.2 V15.2 H7.2 V13.6 H8.5 V9.5 H7.2 Z" fill="#fff"/></svg>
<div class="t" style="position:absolute;left:345.3px;top:364.0px;line-height:30px;font-size:18.2px;color:#2a78f6">IO<span style="font-size:17.6px">映射变量</span></div>
<div style="position:absolute;left:0;top:397.1px;width:2298px;height:36.2px;background:#fafafa"></div>
<svg style="position:absolute;left:108.7px;top:405.6px" width="19" height="19"><circle cx="9.5" cy="9.5" r="9" fill="#0b5ed7"/><circle cx="9.5" cy="5.2" r="1.7" fill="#fff"/><path d="M7.2 8 H10.9 V13.6 H12.2 V15.2 H7.2 V13.6 H8.5 V9.5 H7.2 Z" fill="#fff"/></svg>
<div class="t" style="position:absolute;left:345.3px;top:400.1px;line-height:30px;font-size:18.2px;color:#2a78f6"><span style="font-size:17.6px">用户数据类型</span></div>
</div>
<div style="left:364px;top:1571.5px;width:2298px;height:10px;background:linear-gradient(rgba(0,0,0,0.11),rgba(0,0,0,0.03) 50%,rgba(0,0,0,0))"></div>
<div class="t" style="right:2584px;top:2002.50px;line-height:30px;font-size:18.5px;color:#ffffff;font-family:'Liberation Sans', sans-serif;text-align:right;">通信服务空闲</div>
<svg style="position:absolute;left:99px;top:2008px;" width="20" height="20" viewBox="0 0 20 20"><circle cx="10" cy="10" r="8.6" fill="none" stroke="#fff" stroke-width="1.6"/><path d="M6.5 6.5 L13.5 13.5 M13.5 6.5 L6.5 13.5" stroke="#fff" stroke-width="1.6"/></svg>
<div class="t" style="left:123.5px;top:2002.50px;line-height:30px;font-size:18.5px;color:#fff;font-family:'Liberation Sans', sans-serif;">0</div>
<svg style="position:absolute;left:139px;top:2007px;" width="20" height="19" viewBox="0 0 20 19"><path d="M10 1.8 L18.6 17.6 H1.4 Z" fill="none" stroke="#fff" stroke-width="1.6" stroke-linejoin="round"/><path d="M10 7 V12.5" stroke="#fff" stroke-width="1.7"/><circle cx="10" cy="14.8" r="1" fill="#fff"/></svg>
<div class="t" style="left:164px;top:2002.50px;line-height:30px;font-size:18.5px;color:#fff;font-family:'Liberation Sans', sans-serif;">0</div>
<div class="t" style="left:191px;top:2002.50px;line-height:30px;font-size:17.8px;color:#fff;font-family:'Liberation Sans', sans-serif;">ClientID-22a2c68f-49ae-49e9-9ba3-1bdeec862371</div>
</body></html>
